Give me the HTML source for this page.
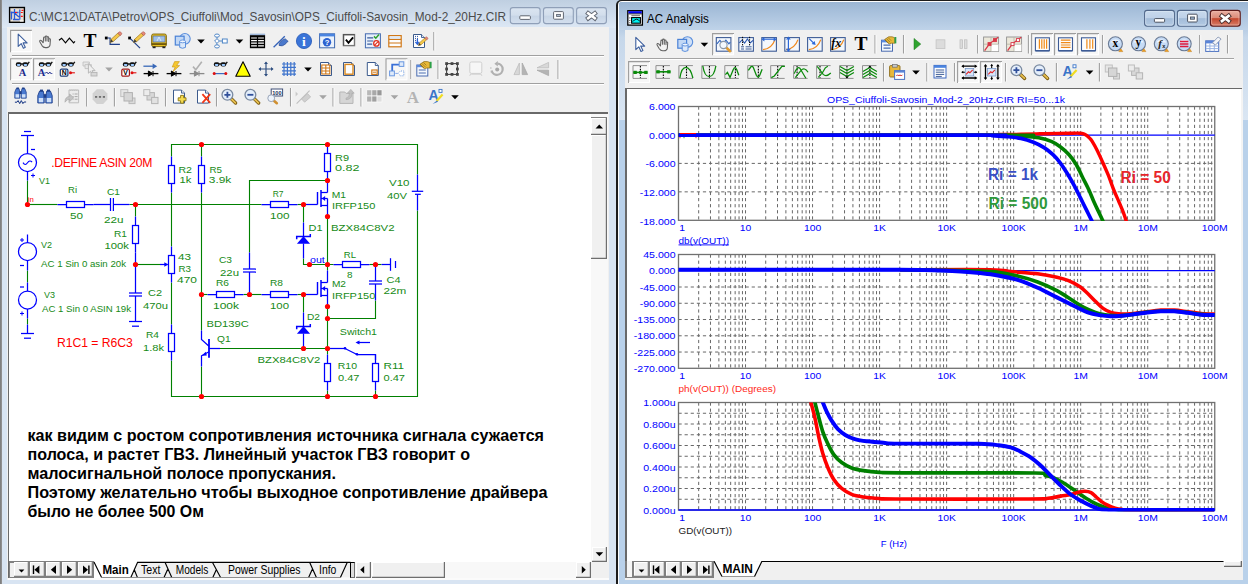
<!DOCTYPE html>
<html><head><meta charset="utf-8"><title>MC12</title>
<style>
html,body{margin:0;padding:0}
body{width:1248px;height:584px;position:relative;overflow:hidden;background:#b9d1ea;font-family:"Liberation Sans",sans-serif}
svg text{font-family:"Liberation Sans",sans-serif}
svg text.sf{font-family:"Liberation Serif",serif}
#ov{position:absolute;left:0;top:0}
</style></head><body>
<div style="position:absolute;left:0px;top:0px;width:617px;height:584px;background:#d8e4f2;"></div>
<div style="position:absolute;left:0px;top:0px;width:617px;height:28px;background:linear-gradient(#bfcfe1,#dde8f5);"></div>
<div style="position:absolute;left:0px;top:0px;width:1.7px;height:584px;background:linear-gradient(90deg,#787878,#969696);"></div>
<div style="position:absolute;left:7.3px;top:26.8px;width:601.7px;height:553px;background:#f0f0f0;"></div>
<div style="position:absolute;left:12px;top:55.0px;width:592px;height:1px;background:#a0a0a0;"></div>
<div style="position:absolute;left:12px;top:56.0px;width:592px;height:1px;background:#ffffff;"></div>
<div style="position:absolute;left:12px;top:83.2px;width:592px;height:1px;background:#a0a0a0;"></div>
<div style="position:absolute;left:12px;top:84.2px;width:592px;height:1px;background:#ffffff;"></div>
<div style="position:absolute;left:7.5px;top:112.3px;width:600px;height:466px;background:#696969;"></div>
<div style="position:absolute;left:9px;top:114px;width:598.5px;height:464px;background:#ffffff;"></div>
<div style="position:absolute;left:8px;top:577.7px;width:600.5px;height:2px;background:#fbfbfb;"></div>
<div style="position:absolute;left:591px;top:114px;width:16.5px;height:448px;background:#f8f8f8;"></div>
<div style="position:absolute;left:591px;top:116.6px;width:16px;height:18.6px;background:#f0f0f0;box-shadow:inset -1.2px -1.2px 0 #6e6e6e,inset 1px 1px 0 #fff;border-top:1.4px solid #808080;box-sizing:border-box;"></div>
<svg style="position:absolute;left:591px;top:114px" width="17" height="24"><path d="M4.5 14.6 L12 14.6 L8.25 10.6Z" fill="#000"/></svg>
<div style="position:absolute;left:591px;top:135.2px;width:16px;height:124px;background:#f0f0f0;box-shadow:inset -1.2px -1.2px 0 #6e6e6e,inset 1px 1px 0 #fff;"></div>
<div style="position:absolute;left:591.6px;top:546.7px;width:15.6px;height:15px;background:#f0f0f0;box-shadow:inset -1.2px -1.2px 0 #6e6e6e,inset 1px 1px 0 #fff;"></div>
<svg style="position:absolute;left:591px;top:546px" width="17" height="16"><path d="M4.6 6.2 L12.2 6.2 L8.4 10.2Z" fill="#000"/></svg>
<div style="position:absolute;left:9px;top:561.5px;width:598.5px;height:16.3px;background:#f0f0f0;"></div>
<div style="position:absolute;left:94px;top:561.5px;width:257px;height:16.3px;background:#ffffff;"></div>
<div style="position:absolute;left:9px;top:561.3px;width:85px;height:16.5px;background:#808080;"></div>
<div style="position:absolute;left:9.5px;top:562.6px;width:4.5px;height:14px;background:#f0f0f0;"></div>
<div style="position:absolute;left:13.9px;top:562.3px;width:15px;height:14.6px;background:#f0f0f0;box-shadow:inset -1.3px -1.3px 0 #808080,inset 1px 1px 0 #fff;"></div>
<div style="position:absolute;left:29.9px;top:562.3px;width:15px;height:14.6px;background:#f0f0f0;box-shadow:inset -1.3px -1.3px 0 #808080,inset 1px 1px 0 #fff;"></div>
<div style="position:absolute;left:45.9px;top:562.3px;width:15px;height:14.6px;background:#f0f0f0;box-shadow:inset -1.3px -1.3px 0 #808080,inset 1px 1px 0 #fff;"></div>
<div style="position:absolute;left:61.9px;top:562.3px;width:15px;height:14.6px;background:#f0f0f0;box-shadow:inset -1.3px -1.3px 0 #808080,inset 1px 1px 0 #fff;"></div>
<div style="position:absolute;left:77.9px;top:562.3px;width:15px;height:14.6px;background:#f0f0f0;box-shadow:inset -1.3px -1.3px 0 #808080,inset 1px 1px 0 #fff;"></div>
<svg style="position:absolute;left:0;top:556px" width="110" height="28"><path d="M18.6 13.4h5.8l-2.9 3z" fill="#000"/><path d="M33.5 9.4v8.6" stroke="#000" stroke-width="1.4"/><path d="M34.4 13.7l5-4.3v8.6z" fill="#000"/><path d="M50.8 13.7l5.2-4.4v8.8z" fill="#000"/><path d="M72.2 13.7l-5.2-4.4v8.8z" fill="#000"/><path d="M88.9 9.4v8.6" stroke="#000" stroke-width="1.4"/><path d="M88 13.7l-5-4.3v8.6z" fill="#000"/></svg>
<svg style="position:absolute;left:0;top:556px" width="620" height="28" font-family="Liberation Sans, sans-serif"><path d="M130.8 21.4 L137.6 6.3 H350.5 V21.4Z" fill="#f0f0f0"/><path d="M94 6.1 L101.6 21.4 M130.8 21.4 L137.6 6.3 H350.5 M134.2 13.5 L137.4 21.4 M165 6.3 L171.8 21.4 M164 21.4 L167.6 13.5 M212.4 6.3 L220.6 21.4 M212.8 21.4 L216.4 13.5 M309.6 6.3 L316.4 21.4 M308.6 21.4 L312.2 13.5 M340.4 21.4 L347.3 6.3" stroke="#000" stroke-width="1.15" fill="none"/><path d="M101.6 21.5 H341" stroke="#808080" stroke-width="0.9"/><text x="102.4" y="17.5" font-size="12.4" font-weight="bold" textLength="26.3" lengthAdjust="spacingAndGlyphs">Main</text><text x="141" y="17.5" font-size="12.7" textLength="19.4" lengthAdjust="spacingAndGlyphs">Text</text><text x="175.8" y="17.5" font-size="12.7" textLength="32.6" lengthAdjust="spacingAndGlyphs">Models</text><text x="228" y="17.5" font-size="12.7" textLength="72.5" lengthAdjust="spacingAndGlyphs">Power Supplies</text><text x="319" y="17.5" font-size="12.7" textLength="17.4" lengthAdjust="spacingAndGlyphs">Info</text></svg>
<div style="position:absolute;left:350.2px;top:561.7px;width:4.7px;height:15.9px;background:#dcdcdc;border:1.2px solid #000;border-right:1.4px solid #707070;border-bottom:1.2px solid #707070;box-sizing:border-box;"></div>
<div style="position:absolute;left:355px;top:561.6px;width:236px;height:16px;background:#f8f8f8;"></div>
<div style="position:absolute;left:355.6px;top:562px;width:15.6px;height:15.7px;background:#f0f0f0;box-shadow:inset -1.2px -1.2px 0 #6e6e6e,inset 1px 1px 0 #fff;"></div>
<div style="position:absolute;left:371.8px;top:562px;width:73px;height:15.7px;background:#f0f0f0;box-shadow:inset -1.2px -1.2px 0 #6e6e6e,inset 1px 1px 0 #fff;"></div>
<div style="position:absolute;left:576px;top:562px;width:15.4px;height:15.7px;background:#f0f0f0;box-shadow:inset -1.2px -1.2px 0 #6e6e6e,inset 1px 1px 0 #fff;"></div>
<div style="position:absolute;left:591.4px;top:561.8px;width:16px;height:16px;background:#f0f0f0;"></div>
<svg style="position:absolute;left:350px;top:556px" width="250" height="28"><path d="M10.2 13.7l4-3.8v7.6z M235.8 13.7l-4-3.8v7.6z" fill="#000"/></svg>
<div style="position:absolute;left:616.3px;top:0px;width:640px;height:584px;background:#1c1c1c;border-radius:5px 0 0 0;"></div>
<div style="position:absolute;left:617.9px;top:1.2px;width:640px;height:584px;background:#fdfdfd;border-radius:4px 0 0 0;"></div>
<div style="position:absolute;left:619px;top:2.3px;width:640px;height:584px;background:#b9d1ea;border-radius:3px 0 0 0;"></div>
<div style="position:absolute;left:619px;top:2.3px;width:640px;height:118px;background:linear-gradient(#9bb6d4 0%,#b6cbe3 22%,#c6d7ea 30%,#dae6f3 100%);border-radius:3px 0 0 0;"></div>
<div style="position:absolute;left:619px;top:2.3px;width:640px;height:28px;background:linear-gradient(#9bb6d4,#bfd3e9);border-radius:3px 0 0 0;"></div>
<div style="position:absolute;left:625.2px;top:30px;width:617.7px;height:550px;background:#f0f0f0;"></div>
<div style="position:absolute;left:630px;top:58px;width:604px;height:1px;background:#a4a4a4;"></div>
<div style="position:absolute;left:630px;top:59px;width:604px;height:1px;background:#ffffff;"></div>
<div style="position:absolute;left:625.2px;top:87.5px;width:617px;height:474px;background:#696969;"></div>
<div style="position:absolute;left:627px;top:89.2px;width:614.4px;height:472.3px;background:#ffffff;"></div>
<div style="position:absolute;left:1241.4px;top:88.5px;width:1.5px;height:473px;background:#f4f4f4;"></div>
<div style="position:absolute;left:627px;top:561px;width:615.9px;height:19px;background:#f0f0f0;"></div>
<div style="position:absolute;left:625.2px;top:561px;width:1.8px;height:16.8px;background:#808080;"></div>
<div style="position:absolute;left:632.4px;top:561.2px;width:81.4px;height:16.6px;background:#808080;"></div>
<div style="position:absolute;left:625.2px;top:576.6px;width:88.6px;height:1.3px;background:#808080;"></div>
<div style="position:absolute;left:627px;top:561px;width:5.4px;height:15.6px;background:#f6f6f6;"></div>
<div style="position:absolute;left:633.7px;top:562.3px;width:15px;height:14.6px;background:#f0f0f0;box-shadow:inset -1.3px -1.3px 0 #808080,inset 1px 1px 0 #fff;"></div>
<div style="position:absolute;left:649.7px;top:562.3px;width:15px;height:14.6px;background:#f0f0f0;box-shadow:inset -1.3px -1.3px 0 #808080,inset 1px 1px 0 #fff;"></div>
<div style="position:absolute;left:665.7px;top:562.3px;width:15px;height:14.6px;background:#f0f0f0;box-shadow:inset -1.3px -1.3px 0 #808080,inset 1px 1px 0 #fff;"></div>
<div style="position:absolute;left:681.7px;top:562.3px;width:15px;height:14.6px;background:#f0f0f0;box-shadow:inset -1.3px -1.3px 0 #808080,inset 1px 1px 0 #fff;"></div>
<div style="position:absolute;left:697.7px;top:562.3px;width:15px;height:14.6px;background:#f0f0f0;box-shadow:inset -1.3px -1.3px 0 #808080,inset 1px 1px 0 #fff;"></div>
<svg style="position:absolute;left:619.6px;top:556px" width="110" height="28"><path d="M18.6 13.4h5.8l-2.9 3z" fill="#000"/><path d="M33.5 9.4v8.6" stroke="#000" stroke-width="1.4"/><path d="M34.4 13.7l5-4.3v8.6z" fill="#000"/><path d="M50.8 13.7l5.2-4.4v8.8z" fill="#000"/><path d="M72.2 13.7l-5.2-4.4v8.8z" fill="#000"/><path d="M88.9 9.4v8.6" stroke="#000" stroke-width="1.4"/><path d="M88 13.7l-5-4.3v8.6z" fill="#000"/></svg>
<svg style="position:absolute;left:620px;top:556px" width="628" height="28" font-family="Liberation Sans, sans-serif"><path d="M94.1 5.2 L102 20.4 H134.5 L141.8 5.2Z" fill="#fff"/><path d="M102 20.5 H134.5" stroke="#8c8c8c" stroke-width="0.9"/><path d="M94.1 5.3 L102 20.5 M134.5 20.5 L141.8 5.5 H603.5" stroke="#000" stroke-width="1.2" fill="none"/><text x="102.4" y="17" font-size="13.2" font-weight="bold" textLength="30.4" lengthAdjust="spacingAndGlyphs">MAIN</text></svg>
<div style="position:absolute;left:1223.5px;top:560.6px;width:18px;height:6.6px;background:#f0f0f0;box-shadow:inset -1.3px -1.3px 0 #6a6a6a,inset 1px 1px 0 #fff;"></div>
<svg id="ov" width="1248" height="584" viewBox="0 0 1248 584">
<defs>
<linearGradient id="gbi" x1="0" y1="0" x2="0" y2="1"><stop offset="0" stop-color="#dbe5f1"/><stop offset="0.48" stop-color="#d2deec"/><stop offset="0.52" stop-color="#c7d5e6"/><stop offset="1" stop-color="#d3dfee"/></linearGradient>
<linearGradient id="gba" x1="0" y1="0" x2="0" y2="1"><stop offset="0" stop-color="#c9daed"/><stop offset="0.48" stop-color="#bed1e8"/><stop offset="0.52" stop-color="#a3bcd9"/><stop offset="1" stop-color="#b4cae3"/></linearGradient>
<linearGradient id="gbc" x1="0" y1="0" x2="0" y2="1"><stop offset="0" stop-color="#eab1a4"/><stop offset="0.48" stop-color="#dc8b78"/><stop offset="0.52" stop-color="#c4472e"/><stop offset="1" stop-color="#d8826c"/></linearGradient>
</defs>
<text x="29" y="20.6" font-size="12.6" fill="#4b4b4b" textLength="477" lengthAdjust="spacingAndGlyphs">C:\MC12\DATA\Petrov\OPS_Ciuffoli\Mod_Savosin\OPS_Ciuffoli-Savosin_Mod-2_20Hz.CIR</text>
<rect x="9.6" y="7.5" width="14.8" height="14.8" fill="#e8e2d6" stroke="#000" stroke-width="1.4"/><path d="M14.5 9v11M10.5 12.5h8M13 19.5h6.5M19.8 9.5v10M15 13.5l4 3.5M11.5 11.5v8" stroke="#2a5bd8" stroke-width="1.3" fill="none"/><path d="M15 12.5h2M21.5 10.3h2M20.8 12.5h2M20.8 16.4h2" stroke="#ff1010" stroke-width="1.2"/><path d="M20 21h3.6" stroke="#fff" stroke-width="1"/>
<rect x="510.3" y="7.6" width="29.8" height="16" rx="2.6" fill="url(#gbi)" stroke="#8f9fb8" stroke-width="1.1"/>
<rect x="543.5" y="7.6" width="29.8" height="16" rx="2.6" fill="url(#gbi)" stroke="#8f9fb8" stroke-width="1.1"/>
<rect x="576.6" y="7.6" width="29.8" height="16" rx="2.6" fill="url(#gbi)" stroke="#8f9fb8" stroke-width="1.1"/>
<rect x="519.8" y="15.8" width="10.6" height="3.6" rx="0.8" fill="#fff" stroke="#5f6570" stroke-width="1"/>
<rect x="553.6" y="11.6" width="9.8" height="7.6" rx="0.8" fill="#fff" stroke="#5f6570" stroke-width="1"/><rect x="556.6" y="14.4" width="3.8" height="2" fill="#b9c6d8" stroke="#5f6570" stroke-width="0.9"/>
<path d="M588.2 13.3 L594.8 18.3 M594.8 13.3 L588.2 18.3" stroke="#5f6570" stroke-width="4.4" stroke-linecap="square"/><path d="M588.2 13.3 L594.8 18.3 M594.8 13.3 L588.2 18.3" stroke="#fff" stroke-width="2.6" stroke-linecap="square"/>
<text x="647" y="23.1" font-size="12.8" fill="#000" textLength="61.8" lengthAdjust="spacingAndGlyphs">AC Analysis</text>
<rect x="627.8" y="10.7" width="14.6" height="14.4" fill="#fff" stroke="#000" stroke-width="1.3"/><rect x="628.4" y="11.2" width="13.4" height="2.3" fill="#0000ee"/><path d="M628.4 13.9h13.4" stroke="#000" stroke-width="0.8"/><path d="M631.4 15.7h8.6" stroke="#444" stroke-width="0.8"/><rect x="631.6" y="17.6" width="8.8" height="5.6" fill="#00f4f4" stroke="#000" stroke-width="1.1"/><path d="M632.8 21.6l1.6-1.6q2.2-1.6 4.2 0l1.4 1.6" stroke="#000" stroke-width="0.9" fill="none"/><path d="M629.8 17.5v0.8M629.8 20v0.8M629.8 22.4v0.8" stroke="#000" stroke-width="0.9"/>
<rect x="1144.6" y="10.4" width="29.8" height="15.8" rx="2.6" fill="url(#gba)" stroke="#52688a" stroke-width="1.1"/><rect x="1145.6999999999998" y="11.5" width="27.6" height="13.6" rx="1.8" fill="none" stroke="#dce8f5" stroke-opacity="0.7" stroke-width="0.9"/>
<rect x="1177.4" y="10.4" width="29.8" height="15.8" rx="2.6" fill="url(#gba)" stroke="#52688a" stroke-width="1.1"/><rect x="1178.5" y="11.5" width="27.6" height="13.6" rx="1.8" fill="none" stroke="#dce8f5" stroke-opacity="0.7" stroke-width="0.9"/>
<rect x="1210.4" y="10.4" width="29.8" height="15.8" rx="2.6" fill="url(#gbc)" stroke="#5c1c1c" stroke-width="1.2"/><rect x="1211.6000000000001" y="11.6" width="27.4" height="13.4" rx="1.8" fill="none" stroke="#f3b9ac" stroke-opacity="0.7" stroke-width="0.9"/>
<rect x="1154.4" y="18.6" width="10.2" height="3.6" rx="0.8" fill="#fff" stroke="#4a5260" stroke-width="1"/>
<rect x="1187.6" y="14.2" width="9.6" height="7.8" rx="0.8" fill="#fff" stroke="#4a5260" stroke-width="1"/><rect x="1190.4" y="17" width="4" height="2.2" fill="#9fb6d4" stroke="#4a5260" stroke-width="0.9"/>
<path d="M1222 16 L1228.6 21 M1228.6 16 L1222 21" stroke="#4a3030" stroke-width="4.6" stroke-linecap="square"/><path d="M1222 16 L1228.6 21 M1228.6 16 L1222 21" stroke="#fff" stroke-width="2.7" stroke-linecap="square"/>
<rect x="10" y="29.8" width="22" height="22.400000000000002" fill="#f7f7f7"/><path d="M10.6 52.2V30.400000000000002H32" stroke="#9c9c9c" stroke-width="1.1" fill="none"/><path d="M11 51.7H31.5V30.8" stroke="#fff" stroke-width="1" fill="none"/>
<g transform="translate(14.00,33.00)"><path d="M4.2 1.2v12.2l3-2.8 2.2 4.6 1.9-0.9-2.2-4.4h4z" fill="#fff" stroke="#3d5f9e" stroke-width="1.1" stroke-linejoin="round"/></g>
<g transform="translate(37.00,33.00)"><path d="M6.2 9.8L4.4 7.6q-0.8-0.7-1.5-0.1q-0.5 0.7 0 1.5L5 12.6q1.3 2 3.4 2h1.4q2.6 0 3.2-2.4L13.4 6.6q0-0.9-0.85-0.9t-0.85 0.9V8.4V4.6q0-0.9-0.85-0.9t-0.85 0.9V8V3.8q0-0.9-0.85-0.9t-0.85 0.9V8V4.8q0-0.9-0.85-0.9t-0.85 0.9z" fill="#f2f2f2" stroke="#606060" stroke-width="1.05" stroke-linejoin="round"/></g>
<g transform="translate(59.00,33.00)"><path d="M0 7.2L2.6 5.2L6.5 9.9L10.4 5.2L14.6 9.9L16 8.4" stroke="#000" stroke-width="1.15" fill="none"/></g>
<g transform="translate(82.00,33.00)"><text x="8" y="14" class="sf" font-weight="bold" font-size="19.5" text-anchor="middle" fill="#000">T</text></g>
<g transform="translate(104.50,33.00)"><rect x="0.4" y="3.6" width="2.8" height="2.8" fill="#000"/><path d="M3 5h2.6v6.4h9.8" stroke="#1f3f87" stroke-width="1.2" fill="none"/><g transform="translate(5.6,9.4) scale(0.95)"><path d="M0 0l1-3.2 7.2-6.6 2.3 2.4-7.2 6.5z" fill="#f4c84a" stroke="#9a7420" stroke-width="0.7"/><path d="M8.2-9.8l1.4-1.2q0.9-0.5 1.7 0.3l0.7 0.8q0.6 0.9-0.1 1.6l-1.4 1.2z" fill="#e58a7c" stroke="#a85244" stroke-width="0.6"/><path d="M0 0l1-3.2 2.3 2.3z" fill="#3a3a3a"/></g></g>
<g transform="translate(128.00,33.00)"><rect x="0.2" y="3.6" width="2.8" height="2.8" fill="#000"/><path d="M2.4 5.6l9.6 9.6" stroke="#1f3f87" stroke-width="1.2" fill="none"/><g transform="translate(5.6,9.4) scale(0.95)"><path d="M0 0l1-3.2 7.2-6.6 2.3 2.4-7.2 6.5z" fill="#f4c84a" stroke="#9a7420" stroke-width="0.7"/><path d="M8.2-9.8l1.4-1.2q0.9-0.5 1.7 0.3l0.7 0.8q0.6 0.9-0.1 1.6l-1.4 1.2z" fill="#e58a7c" stroke="#a85244" stroke-width="0.6"/><path d="M0 0l1-3.2 2.3 2.3z" fill="#3a3a3a"/></g></g>
<g transform="translate(151.00,33.00)"><rect x="0.6" y="1" width="14.8" height="12.6" rx="1.8" fill="#e8c020" stroke="#7a6410" stroke-width="0.9"/><rect x="2" y="3" width="12" height="6" fill="#9fc0e8" stroke="#5a6a88" stroke-width="0.7"/><path d="M6 8l2-4 2 4" stroke="#e8f0fa" stroke-width="0.8" fill="none"/><rect x="0.6" y="10.4" width="14.8" height="1.3" fill="#403000"/><rect x="1.6" y="13.4" width="3" height="1.8" fill="#222"/><rect x="11.4" y="13.4" width="3" height="1.8" fill="#222"/></g>
<g transform="translate(174.50,33.00)"><circle cx="10.4" cy="5.8" r="5.3" fill="#cfe0f7" stroke="#5a8edc" stroke-width="1.1"/><rect x="0.8" y="3.2" width="8.8" height="8.8" fill="#c2d8f5" stroke="#4a82d6" stroke-width="1.2"/><path d="M5.2 8.4v6q2.8 1.7 5.8 0v-6" fill="#dce9fa" stroke="#5a8edc" stroke-width="1"/><ellipse cx="8.1" cy="8.4" rx="2.9" ry="1.4" fill="#f0f6fe" stroke="#5a8edc" stroke-width="0.9"/></g>
<g transform="translate(193.00,33.00)"><path d="M4.2 6.6h7.6l-3.8 4z" fill="#000"/></g>
<g transform="translate(212.00,33.00)"><ellipse cx="5" cy="2.6" rx="2.4" ry="1.6" fill="#fff" stroke="#4f86c6" stroke-width="1"/><path d="M5 5.6l2.4 2.4-2.4 2.4-2.4-2.4z" fill="#fff" stroke="#4f86c6" stroke-width="1"/><ellipse cx="5" cy="13.4" rx="2.4" ry="1.6" fill="#fff" stroke="#4f86c6" stroke-width="1"/><path d="M5 4.2v1.4M5 10.4v1.4M7.4 8h3" stroke="#4f86c6" stroke-width="1"/><rect x="10.4" y="6" width="4.8" height="4" fill="#fff" stroke="#4f86c6" stroke-width="1"/></g>
<g transform="translate(231.50,33.00)"><path d="M4.2 6.6h7.6l-3.8 4z" fill="#000"/></g>
<g transform="translate(249.50,33.00)"><rect x="0.4" y="0.6" width="15.2" height="2" fill="#9fb8dc"/><rect x="0.4" y="2.2" width="15.2" height="13" fill="#000"/><path d="M1.6 5h5.8M8.6 5h5.8M1.6 7.6h5.8M8.6 7.6h5.8M1.6 10.2h5.8M8.6 10.2h5.8M1.6 12.8h5.8M8.6 12.8h5.8" stroke="#fff" stroke-width="1.2"/></g>
<g transform="translate(273.00,33.00)"><path d="M0.6 14.2l11.2-11" stroke="#3562b8" stroke-width="1.3"/><path d="M6 12.4q0.4-4.6 6.2-6.6l3 2.6q-2.4 1-2.6 2.6q-3.6 3-6.6 1.4z" fill="#4a78cc" stroke="#2c5098" stroke-width="0.7"/></g>
<g transform="translate(296.00,33.00)"><circle cx="8" cy="8" r="7.6" fill="#3a74d8"/><circle cx="8" cy="8" r="7.6" fill="none" stroke="#2458b8" stroke-width="0.8"/><text x="8" y="13" class="sf" font-weight="bold" font-size="13.5" text-anchor="middle" fill="#fff">i</text></g>
<g transform="translate(319.00,33.00)"><rect x="0.6" y="0.8" width="15" height="14" fill="#eaf1fb" stroke="#3e68b0" stroke-width="1"/><rect x="0.6" y="0.8" width="15" height="2.6" fill="#4a84e0"/><circle cx="8" cy="9.2" r="4.2" fill="#2c62d0"/><text x="8" y="12" font-size="7.6" font-weight="bold" text-anchor="middle" fill="#fff">?</text></g>
<g transform="translate(341.50,33.00)"><rect x="2" y="1.6" width="11" height="11" fill="#fff" stroke="#777" stroke-width="1.4"/><path d="M2 12.6v-11h11" stroke="#555" stroke-width="1.2" fill="none"/><path d="M4.4 6.6l2.6 3.2 4.6-5.4" stroke="#000" stroke-width="1.9" fill="none"/></g>
<g transform="translate(364.80,33.00)"><rect x="0.6" y="0.8" width="15" height="14" fill="#e6eefa" stroke="#446ab0" stroke-width="1"/><path d="M2.4 4.8h6M2.4 8h6M2.4 11.2h5" stroke="#3a5c9c" stroke-width="1.2"/><path d="M9.2 3.4l1.8 1.8 3.2-3.6" stroke="#2ca02c" stroke-width="1.5" fill="none"/><circle cx="11.6" cy="10.4" r="2.7" fill="#fff" stroke="#e03020" stroke-width="1.3"/><path d="M9.8 12.2l3.6-3.6" stroke="#e03020" stroke-width="1.2"/></g>
<g transform="translate(387.00,33.00)"><rect x="1.8" y="2.6" width="12.4" height="11.2" fill="#fdfdfd" stroke="#d07818" stroke-width="1.2"/><path d="M1.8 6.4h12.4M1.8 10h12.4" stroke="#d07818" stroke-width="1.2"/><rect x="3" y="3.6" width="10" height="2" fill="#dbe8f8"/></g>
<g transform="translate(411.00,33.00)"><path d="M2.5 1.5h8l3 3v10h-11z" fill="#fff" stroke="#3b5a8c" stroke-width="1"/><path d="M10.5 1.5v3h3" fill="#dfe8f5" stroke="#3b5a8c" stroke-width="0.9"/><path d="M4 3.4h1M6 3.4h1M4 5.4h1M6 5.4h1M6 7.4h1M4 7.4h1" stroke="#2a50a0" stroke-width="1"/><path d="M6.4 6v4.4M4.4 8.8l2 2.4 2-2.4" stroke="#2a62d8" stroke-width="1.3" fill="none"/><g transform="translate(7.4,12.6) scale(0.78)"><path d="M0 0l1-3.2 7.2-6.6 2.3 2.4-7.2 6.5z" fill="#f4c84a" stroke="#9a7420" stroke-width="0.7"/><path d="M8.2-9.8l1.4-1.2q0.9-0.5 1.7 0.3l0.7 0.8q0.6 0.9-0.1 1.6l-1.4 1.2z" fill="#e58a7c" stroke="#a85244" stroke-width="0.6"/><path d="M0 0l1-3.2 2.3 2.3z" fill="#3a3a3a"/></g></g>
<path d="M433.8 32V50.5" stroke="#a0a0a0" stroke-width="1.1"/><path d="M434.90000000000003 32V50.5" stroke="#fafafa" stroke-width="1"/>
<rect x="10" y="58.2" width="22" height="22.0" fill="#f7f7f7"/><path d="M10.6 80.2V58.800000000000004H32" stroke="#9c9c9c" stroke-width="1.1" fill="none"/><path d="M11 79.7H31.5V59.2" stroke="#fff" stroke-width="1" fill="none"/>
<rect x="33" y="58.2" width="22" height="22.0" fill="#f7f7f7"/><path d="M33.6 80.2V58.800000000000004H55" stroke="#9c9c9c" stroke-width="1.1" fill="none"/><path d="M34 79.7H54.5V59.2" stroke="#fff" stroke-width="1" fill="none"/>
<rect x="385.4" y="58.2" width="22.0" height="22.0" fill="#f7f7f7"/><path d="M386.0 80.2V58.800000000000004H407.4" stroke="#9c9c9c" stroke-width="1.1" fill="none"/><path d="M386.4 79.7H406.9V59.2" stroke="#fff" stroke-width="1" fill="none"/>
<g transform="translate(14.00,61.00)"><rect x="1.8" y="1.3" width="5.7" height="4.1" rx="1.9" fill="#111"/><rect x="8.5" y="1.3" width="5.7" height="4.1" rx="1.9" fill="#111"/><rect x="7" y="2.3" width="2" height="1.3" fill="#111"/><path d="M13.6 3.2L15.3 0.9" stroke="#111" stroke-width="1.3"/><rect x="2.9" y="3" width="3.5" height="1.9" rx="0.8" fill="#9ccaff"/><rect x="9.7" y="3" width="3.5" height="1.9" rx="0.8" fill="#9ccaff"/><text x="8.4" y="15" class="sf" font-weight="bold" font-size="10.4" text-anchor="middle" fill="#1c2a8c">A</text></g>
<g transform="translate(37.00,61.00)"><rect x="1.8" y="1.3" width="5.7" height="4.1" rx="1.9" fill="#111"/><rect x="8.5" y="1.3" width="5.7" height="4.1" rx="1.9" fill="#111"/><rect x="7" y="2.3" width="2" height="1.3" fill="#111"/><path d="M13.6 3.2L15.3 0.9" stroke="#111" stroke-width="1.3"/><rect x="2.9" y="3" width="3.5" height="1.9" rx="0.8" fill="#9ccaff"/><rect x="9.7" y="3" width="3.5" height="1.9" rx="0.8" fill="#9ccaff"/><text x="4.4" y="15" class="sf" font-weight="bold" font-size="10.4" text-anchor="middle" fill="#1c2a8c">A</text><path d="M7.4 12h1.4l1-1 1.5 2 1.5-2 1.5 2 1-1" stroke="#1c2a8c" stroke-width="0.9" fill="none"/></g>
<g transform="translate(59.50,61.00)"><rect x="1.8" y="1.3" width="5.7" height="4.1" rx="1.9" fill="#111"/><rect x="8.5" y="1.3" width="5.7" height="4.1" rx="1.9" fill="#111"/><rect x="7" y="2.3" width="2" height="1.3" fill="#111"/><path d="M13.6 3.2L15.3 0.9" stroke="#111" stroke-width="1.3"/><rect x="2.9" y="3" width="3.5" height="1.9" rx="0.8" fill="#9ccaff"/><rect x="9.7" y="3" width="3.5" height="1.9" rx="0.8" fill="#9ccaff"/><rect x="0.8" y="8.2" width="7.6" height="7" rx="1.2" fill="#fff" stroke="#1c3c78" stroke-width="1.2"/><text x="4.6" y="14.2" font-size="6.8" font-weight="bold" text-anchor="middle" fill="#000">N</text><circle cx="11" cy="11.8" r="1.5" fill="#e01010"/><path d="M11 11.8h4.4" stroke="#e01010" stroke-width="1.1"/></g>
<g transform="translate(82.00,61.00)"><path d="M1 1h6.4v4H1z" fill="#e8e8e8" stroke="#c2c2c2" stroke-width="0.9"/><path d="M3 3.6h6.4v4H3z" fill="#e8e8e8" stroke="#c2c2c2" stroke-width="0.9"/><path d="M6.4 2.6v9.6l2.2-2 1.6 3.4 1.6-0.8-1.7-3.2h3z" fill="#f0f0f0" stroke="#b8b8b8" stroke-width="1"/><rect x="9" y="11.4" width="6" height="3.6" fill="#d8d8d8" stroke="#b4b4b4" stroke-width="0.9"/></g>
<g transform="translate(101.00,61.00)"><path d="M4.2 6.6h7.6l-3.8 4z" fill="#a4a4a4"/></g>
<g transform="translate(121.00,61.00)"><rect x="1.8" y="1.3" width="5.7" height="4.1" rx="1.9" fill="#111"/><rect x="8.5" y="1.3" width="5.7" height="4.1" rx="1.9" fill="#111"/><rect x="7" y="2.3" width="2" height="1.3" fill="#111"/><path d="M13.6 3.2L15.3 0.9" stroke="#111" stroke-width="1.3"/><rect x="2.9" y="3" width="3.5" height="1.9" rx="0.8" fill="#9ccaff"/><rect x="9.7" y="3" width="3.5" height="1.9" rx="0.8" fill="#9ccaff"/><rect x="0.8" y="8.2" width="7.6" height="7" rx="1.2" fill="#fff" stroke="#a01818" stroke-width="1.2"/><text x="4.6" y="14.2" font-size="6.8" font-weight="bold" text-anchor="middle" fill="#000">V</text><circle cx="11" cy="11.8" r="1.5" fill="#e01010"/><path d="M11 11.8h4.4" stroke="#e01010" stroke-width="1.1"/></g>
<g transform="translate(143.00,61.00)"><path d="M0.4 5.2h11" stroke="#3868b8" stroke-width="1.3"/><path d="M9.6 2.4l4.6 2.8-4.6 2.8z" fill="#3868b8"/><path d="M0.6 12.6h14.8" stroke="#000" stroke-width="1.3"/><path d="M5.4 10.0v5.2l4.4-2.6zM10 10.0v5.2" fill="#000" stroke="#000" stroke-width="1"/></g>
<g transform="translate(166.00,61.00)"><path d="M0.6 12.6h14.8" stroke="#000" stroke-width="1.3"/><path d="M5.4 10.0v5.2l4.4-2.6zM10 10.0v5.2" fill="#000" stroke="#000" stroke-width="1"/><path d="M8.6 0.6h4.8l-2.8 4h3l-6.6 6 2.2-4.6h-3z" fill="#f6c830" stroke="#c89010" stroke-width="0.6"/></g>
<g transform="translate(189.00,61.00)"><path d="M0.6 12.6h14.8" stroke="#8a8a8a" stroke-width="1.3"/><path d="M5.4 10.0v5.2l4.4-2.6zM10 10.0v5.2" fill="#8a8a8a" stroke="#8a8a8a" stroke-width="1"/><path d="M4 5.6l2.8 3.2 6-8" stroke="#b0b0b0" stroke-width="1.6" fill="none"/></g>
<g transform="translate(212.00,61.00)"><rect x="1.8" y="1.3" width="5.7" height="4.1" rx="1.9" fill="#111"/><rect x="8.5" y="1.3" width="5.7" height="4.1" rx="1.9" fill="#111"/><rect x="7" y="2.3" width="2" height="1.3" fill="#111"/><path d="M13.6 3.2L15.3 0.9" stroke="#111" stroke-width="1.3"/><rect x="2.9" y="3" width="3.5" height="1.9" rx="0.8" fill="#9ccaff"/><rect x="9.7" y="3" width="3.5" height="1.9" rx="0.8" fill="#9ccaff"/><path d="M2 12.6h12" stroke="#3a6abf" stroke-width="1.2"/><circle cx="2.2" cy="12.6" r="1.5" fill="#e01010"/><circle cx="13.8" cy="12.6" r="1.5" fill="#e01010"/></g>
<g transform="translate(235.00,61.00)"><path d="M8 0.8l7.2 14.4H0.8z" fill="#ffff00" stroke="#000" stroke-width="1.1" stroke-linejoin="round"/></g>
<g transform="translate(258.00,61.00)"><path d="M8 1.4v13.2M1.4 8h13.2" stroke="#2f4f80" stroke-width="1.2"/><path d="M8 0.4l2 2.6h-4zM8 15.6l2-2.6h-4zM0.4 8l2.6-2v4zM15.6 8l-2.6-2v4z" fill="#2f4f80"/></g>
<g transform="translate(281.00,61.00)"><path d="M3 1v14M6.4 1v14M9.8 1v14M13.2 1v14M1 3h14M1 6.4h14M1 9.8h14M1 13.2h14" stroke="#3f74cc" stroke-width="1.2"/></g>
<g transform="translate(300.00,61.00)"><path d="M4.2 6.6h7.6l-3.8 4z" fill="#000"/></g>
<g transform="translate(318.00,61.00)"><path d="M2.5 1.5h8l3 3v10h-11z" fill="#fff" stroke="#3b5a8c" stroke-width="1"/><path d="M10.5 1.5v3h3" fill="#dfe8f5" stroke="#3b5a8c" stroke-width="0.9"/><rect x="3.8" y="4" width="8" height="9" fill="#fff" stroke="#d07818" stroke-width="1.1"/><path d="M7.8 4v9M3.8 7h8M3.8 10h8" stroke="#d07818" stroke-width="1.1"/></g>
<g transform="translate(341.00,61.00)"><path d="M2.5 1.5h8l3 3v10h-11z" fill="#fff" stroke="#3b5a8c" stroke-width="1"/><path d="M10.5 1.5v3h3" fill="#dfe8f5" stroke="#3b5a8c" stroke-width="0.9"/><rect x="4" y="3.4" width="8" height="9.8" fill="#fdfdfd" stroke="#d88820" stroke-width="1.4"/></g>
<g transform="translate(364.80,61.00)"><path d="M2.5 1.5h8l3 3v10h-11z" fill="#fff" stroke="#3b5a8c" stroke-width="1"/><path d="M10.5 1.5v3h3" fill="#dfe8f5" stroke="#3b5a8c" stroke-width="0.9"/><rect x="7" y="9" width="5.4" height="4.4" fill="#fff" stroke="#d07818" stroke-width="1.2"/><path d="M8 11.2h3.4" stroke="#d07818" stroke-width="1"/></g>
<g transform="translate(388.60,61.00)"><path d="M3.6 10V3.6h7" stroke="#3a70d8" stroke-width="1.8" fill="none"/><rect x="10.6" y="0.8" width="4.6" height="4.6" fill="#dfeafa" stroke="#6a98e0" stroke-width="1"/><rect x="1" y="10" width="4.8" height="4.8" fill="#dfeafa" stroke="#6a98e0" stroke-width="1"/><path d="M7 12.4h3" stroke="#3a70d8" stroke-width="1" stroke-dasharray="1 1"/><path d="M9.4 12.4l2.4-2.4h3.4v4.8h-3.4z" fill="#fff" stroke="#6a98e0" stroke-width="0.9" stroke-dasharray="1 1"/></g>
<g transform="translate(415.80,61.00)"><rect x="1" y="4" width="11" height="11" fill="#f4f8fd" stroke="#4a6cb0" stroke-width="1"/><rect x="1" y="4" width="11" height="2.2" fill="#5a8ae0"/><path d="M3 9h7M3 12h7" stroke="#4a6cb0" stroke-width="1.2"/><path d="M4.2 3.2l4-2.6q4-0.6 6 1v5.4h-3.2q-2.4 1.6-4.2-0.8z" fill="#e8b838" stroke="#8a6a18" stroke-width="0.7"/><rect x="14" y="0.8" width="1.8" height="6.4" fill="#2ca048"/><path d="M4.4 3.4l3.6 3.4M6 2.4l3.6 3.6M7.6 1.4l3 3" stroke="#6a5010" stroke-width="0.5"/></g>
<g transform="translate(444.00,61.00)"><rect x="2.6" y="2.6" width="10.8" height="10.8" fill="none" stroke="#444" stroke-width="1.1"/><rect x="1.2" y="1.2" width="2.8" height="2.8" fill="#444"/><rect x="1.2" y="6.6" width="2.8" height="2.8" fill="#444"/><rect x="1.2" y="12" width="2.8" height="2.8" fill="#444"/><rect x="6.6" y="1.2" width="2.8" height="2.8" fill="#444"/><rect x="6.6" y="12" width="2.8" height="2.8" fill="#444"/><rect x="12" y="1.2" width="2.8" height="2.8" fill="#444"/><rect x="12" y="6.6" width="2.8" height="2.8" fill="#444"/><rect x="12" y="12" width="2.8" height="2.8" fill="#444"/></g>
<g transform="translate(467.80,61.00)"><rect x="2" y="1" width="12" height="11.4" rx="1.6" fill="#f6f6f6" stroke="#cfcfcf" stroke-width="1"/><path d="M2 14.8q0-1.6 1.6-1.6h8.8q1.6 0 1.6 1.6" fill="none" stroke="#cfcfcf" stroke-width="1"/></g>
<g transform="translate(489.00,61.00)"><path d="M8.4 2.6A5.6 5.6 0 1 1 2.6 9.4" fill="none" stroke="#b0b0b0" stroke-width="2.2"/><path d="M8.8 0l-3.4 2.8 3.4 2.8z" fill="#b0b0b0"/><circle cx="8.2" cy="8.4" r="2" fill="#a8a8a8"/><path d="M1 7h1.6M1.6 11h1.4" stroke="#b8b8b8" stroke-width="1"/></g>
<g transform="translate(512.80,61.00)"><path d="M6.6 2v11.6H1.2z" fill="#d8d8d8" stroke="#bcbcbc" stroke-width="0.8"/><path d="M9.4 2v11.6h5.4z" fill="#b4b4b4" stroke="#a8a8a8" stroke-width="0.8"/></g>
<g transform="translate(535.00,61.00)"><path d="M13.6 6.8H2l11.6-5.4z" fill="#d8d8d8" stroke="#bcbcbc" stroke-width="0.8"/><path d="M13.6 9.2H2l11.6 5.4z" fill="#b4b4b4" stroke="#a8a8a8" stroke-width="0.8"/></g>
<path d="M410.8 60V79" stroke="#a0a0a0" stroke-width="1.1"/><path d="M411.90000000000003 60V79" stroke="#fafafa" stroke-width="1"/>
<path d="M438 60V79" stroke="#a0a0a0" stroke-width="1.1"/><path d="M439.1 60V79" stroke="#fafafa" stroke-width="1"/>
<path d="M558 60V79" stroke="#a0a0a0" stroke-width="1.1"/><path d="M559.1 60V79" stroke="#fafafa" stroke-width="1"/>
<g transform="translate(12.50,88.60)"><g transform="translate(1.6,-0.8) scale(0.8)"><g transform="translate(0,-1.4)"><path d="M2.6 2.4h3.6l1 4.6v7.4H0.8V7z" fill="#4a7ad0" stroke="#20408a" stroke-width="0.9"/><path d="M9.8 2.4h3.6l1.8 4.6v7.4H8.8V7z" fill="#4a7ad0" stroke="#20408a" stroke-width="0.9"/><rect x="6.6" y="5.6" width="2.8" height="3.6" fill="#20408a"/><rect x="1.8" y="9.4" width="4.4" height="4.2" fill="#cfe0f8"/><rect x="9.8" y="9.4" width="4.4" height="4.2" fill="#cfe0f8"/><rect x="3" y="1" width="3" height="2" fill="#20408a"/><rect x="10" y="1" width="3" height="2" fill="#20408a"/></g></g><path d="M2.4 13.6h2l1.2-1.6 1.6 3 1.6-3 1.6 3 1.2-1.6h2" stroke="#103080" stroke-width="1" fill="none"/></g>
<g transform="translate(37.00,88.60)"><g transform="translate(0,0)"><path d="M2.6 2.4h3.6l1 4.6v7.4H0.8V7z" fill="#4a7ad0" stroke="#20408a" stroke-width="0.9"/><path d="M9.8 2.4h3.6l1.8 4.6v7.4H8.8V7z" fill="#4a7ad0" stroke="#20408a" stroke-width="0.9"/><rect x="6.6" y="5.6" width="2.8" height="3.6" fill="#20408a"/><rect x="1.8" y="9.4" width="4.4" height="4.2" fill="#cfe0f8"/><rect x="9.8" y="9.4" width="4.4" height="4.2" fill="#cfe0f8"/><rect x="3" y="1" width="3" height="2" fill="#20408a"/><rect x="10" y="1" width="3" height="2" fill="#20408a"/></g></g>
<g transform="translate(64.00,88.60)"><path d="M5 1.4h9.6v12.8H5z" fill="#ececec" stroke="#bdbdbd" stroke-width="1"/><path d="M5.6 1.2l1 1 1-1 1 1 1-1 1 1 1-1 1 1 1-1" stroke="#bdbdbd" stroke-width="0.8" fill="none"/><path d="M8.6 5.4h1M10.6 5.4h3M8.6 8h1M10.6 8h3M8.6 10.6h1M10.6 10.6h3" stroke="#a8a8a8" stroke-width="1"/><path d="M1 13.6q0-5.6 4.6-5.6V5.4l4 3.8-4 3.8v-2.6q-2.4 0-4.6 3.2z" fill="#c4c4c4" stroke="#aaa" stroke-width="0.7"/></g>
<g transform="translate(92.00,88.60)"><path d="M4.8 0.6h6.4l4.2 4.4v6l-4.2 4.4H4.8L0.6 11V5z" fill="#d2d2d2"/><rect x="3" y="7.4" width="2.2" height="1.8" fill="#707070"/><rect x="6.9" y="7.4" width="2.2" height="1.8" fill="#707070"/><rect x="10.8" y="7.4" width="2.2" height="1.8" fill="#707070"/></g>
<g transform="translate(120.00,88.60)"><rect x="0.8" y="1" width="7" height="7" fill="#e6e6e6" stroke="#c0c0c0" stroke-width="1"/><rect x="9" y="9.4" width="6" height="5.6" fill="#dadada" stroke="#b8b8b8" stroke-width="1"/><rect x="4" y="4" width="8.4" height="8.4" fill="#d6d6d6" stroke="#b0b0b0" stroke-width="1"/></g>
<g transform="translate(143.00,88.60)"><rect x="4" y="4" width="7.4" height="7.4" fill="#d8d8d8" stroke="#b4b4b4" stroke-width="1"/><rect x="0.8" y="1" width="6" height="6" fill="#ececec" stroke="#bcbcbc" stroke-width="1"/><rect x="8.6" y="8.8" width="6.4" height="6.2" fill="#e2e2e2" stroke="#b4b4b4" stroke-width="1"/></g>
<g transform="translate(171.00,88.60)"><path d="M2.5 1.5h8l3 3v10h-11z" fill="#fff" stroke="#3b5a8c" stroke-width="1"/><path d="M10.5 1.5v3h3" fill="#dfe8f5" stroke="#3b5a8c" stroke-width="0.9"/><path d="M9.6 6.8h3v2.4h2.4v3h-2.4v2.4h-3v-2.4H7.2v-3h2.4z" fill="#f6dc50" stroke="#8a7410" stroke-width="0.9"/></g>
<g transform="translate(195.00,88.60)"><path d="M2.5 1.5h8l3 3v10h-11z" fill="#fff" stroke="#3b5a8c" stroke-width="1"/><path d="M10.5 1.5v3h3" fill="#dfe8f5" stroke="#3b5a8c" stroke-width="0.9"/><path d="M7.4 5.6l7.8 8.6M15.2 5.6l-7.8 8.6" stroke="#f03818" stroke-width="1.8"/></g>
<g transform="translate(221.00,88.60)"><path d="M10 10l4.6 4.4" stroke="#7a5a10" stroke-width="3.4" stroke-linecap="round"/><path d="M10.4 10.4l4 3.8" stroke="#e8c050" stroke-width="1.8" stroke-linecap="round"/><circle cx="6.4" cy="6.2" r="5.4" fill="#e4eefb" stroke="#7a8aa0" stroke-width="1.3"/><path d="M3.4 6.2h6M6.4 3.2v6" stroke="#2f4f9a" stroke-width="1.8"/></g>
<g transform="translate(244.00,88.60)"><path d="M10 10l4.6 4.4" stroke="#7a5a10" stroke-width="3.4" stroke-linecap="round"/><path d="M10.4 10.4l4 3.8" stroke="#e8c050" stroke-width="1.8" stroke-linecap="round"/><circle cx="6.4" cy="6.2" r="5.4" fill="#e4eefb" stroke="#7a8aa0" stroke-width="1.3"/><path d="M3.4 6.2h6" stroke="#2f4f9a" stroke-width="1.8"/></g>
<g transform="translate(267.00,88.60)"><rect x="4.2" y="0.4" width="11.4" height="7" fill="#fff" stroke="#405078" stroke-width="1"/><text x="9.9" y="6" font-size="5.6" font-weight="bold" text-anchor="middle" fill="#203060">100</text><path d="M6.4 11.6l3.4 3" stroke="#d09030" stroke-width="2.6" stroke-linecap="round"/><circle cx="4.2" cy="9.6" r="3.4" fill="#eef4fc" stroke="#98a4b8" stroke-width="1"/></g>
<g transform="translate(295.00,88.60)"><path d="M0.6 3l2.4 2.4-2.4 2.4" fill="#c8c8c8"/><path d="M1.6 15l13-13" stroke="#c0c0c0" stroke-width="1.1"/><path d="M6.6 10.4l6-5.4 3 3.4-6 5.2z" fill="#cfcfcf" stroke="#bdbdbd" stroke-width="0.8"/></g>
<g transform="translate(315.00,88.60)"><path d="M4.2 6.6h7.6l-3.8 4z" fill="#a4a4a4"/></g>
<g transform="translate(339.00,88.60)"><path d="M0.8 3.4h5l1.2 1.4h7v10H0.8z" fill="#d6d6d6" stroke="#b6b6b6" stroke-width="1"/><path d="M7 9.6q3.6-0.6 3.6-5H8.4L11.8 0.8l3.4 3.8H13q0 6.4-6 6.4z" fill="#c0c0c0" stroke="#acacac" stroke-width="0.7"/></g>
<g transform="translate(366.50,88.60)"><rect x="0.2" y="1" width="15.6" height="12.8" fill="#fafafa"/><rect x="0.6" y="1.6" width="4.3" height="5.2" fill="#b8b8b8"/><rect x="5.699999999999999" y="1.6" width="4.3" height="5.2" fill="#a8a8a8"/><rect x="10.799999999999999" y="1.6" width="4.3" height="5.2" fill="#989898"/><rect x="0.6" y="7.800000000000001" width="4.3" height="5.2" fill="#b0b0b0"/><rect x="5.699999999999999" y="7.800000000000001" width="4.3" height="5.2" fill="#a0a0a0"/><rect x="10.799999999999999" y="7.800000000000001" width="4.3" height="5.2" fill="#dedede"/></g>
<g transform="translate(386.50,88.60)"><path d="M4.2 6.6h7.6l-3.8 4z" fill="#a4a4a4"/></g>
<g transform="translate(405.00,88.60)"><text x="8" y="14.4" class="sf" font-weight="bold" font-size="17" text-anchor="middle" fill="#b4b4b4">A</text></g>
<g transform="translate(428.00,88.60)"><text x="5.6" y="11.6" font-size="14" font-weight="bold" text-anchor="middle" fill="#3a74c8">A</text><rect x="11" y="0.8" width="3" height="3" fill="#fff" stroke="#3a74c8" stroke-width="0.9"/><path d="M8.6 12.4l6-6.4" stroke="#f0dc20" stroke-width="2.2"/><path d="M4.6 15.4l4.4-3.6 1 1.4z" fill="#3a74c8"/></g>
<g transform="translate(447.00,88.60)"><path d="M4.2 6.6h7.6l-3.8 4z" fill="#000"/></g>
<path d="M58.5 88V106.5" stroke="#a0a0a0" stroke-width="1.1"/><path d="M59.6 88V106.5" stroke="#fafafa" stroke-width="1"/>
<path d="M86.6 88V106.5" stroke="#a0a0a0" stroke-width="1.1"/><path d="M87.69999999999999 88V106.5" stroke="#fafafa" stroke-width="1"/>
<path d="M114.4 88V106.5" stroke="#a0a0a0" stroke-width="1.1"/><path d="M115.5 88V106.5" stroke="#fafafa" stroke-width="1"/>
<path d="M165.5 88V106.5" stroke="#a0a0a0" stroke-width="1.1"/><path d="M166.6 88V106.5" stroke="#fafafa" stroke-width="1"/>
<path d="M216.5 88V106.5" stroke="#a0a0a0" stroke-width="1.1"/><path d="M217.6 88V106.5" stroke="#fafafa" stroke-width="1"/>
<path d="M290.5 88V106.5" stroke="#a0a0a0" stroke-width="1.1"/><path d="M291.6 88V106.5" stroke="#fafafa" stroke-width="1"/>
<path d="M333 88V106.5" stroke="#a0a0a0" stroke-width="1.1"/><path d="M334.1 88V106.5" stroke="#fafafa" stroke-width="1"/>
<path d="M361 88V106.5" stroke="#a0a0a0" stroke-width="1.1"/><path d="M362.1 88V106.5" stroke="#fafafa" stroke-width="1"/>
<rect x="712" y="33" width="22" height="22.200000000000003" fill="#f7f7f7"/><path d="M712.6 55.2V33.6H734" stroke="#9c9c9c" stroke-width="1.1" fill="none"/><path d="M713 54.7H733.5V34" stroke="#fff" stroke-width="1" fill="none"/>
<rect x="1031" y="33" width="22" height="22.200000000000003" fill="#f7f7f7"/><path d="M1031.6 55.2V33.6H1053" stroke="#9c9c9c" stroke-width="1.1" fill="none"/><path d="M1032 54.7H1052.5V34" stroke="#fff" stroke-width="1" fill="none"/>
<rect x="1054" y="33" width="22" height="22.200000000000003" fill="#f7f7f7"/><path d="M1054.6 55.2V33.6H1076" stroke="#9c9c9c" stroke-width="1.1" fill="none"/><path d="M1055 54.7H1075.5V34" stroke="#fff" stroke-width="1" fill="none"/>
<rect x="1077" y="33" width="22" height="22.200000000000003" fill="#f7f7f7"/><path d="M1077.6 55.2V33.6H1099" stroke="#9c9c9c" stroke-width="1.1" fill="none"/><path d="M1078 54.7H1098.5V34" stroke="#fff" stroke-width="1" fill="none"/>
<g transform="translate(631.60,36.20)"><path d="M4.2 1.2v12.2l3-2.8 2.2 4.6 1.9-0.9-2.2-4.4h4z" fill="#fff" stroke="#3d5f9e" stroke-width="1.1" stroke-linejoin="round"/></g>
<g transform="translate(654.30,36.20)"><path d="M6.2 9.8L4.4 7.6q-0.8-0.7-1.5-0.1q-0.5 0.7 0 1.5L5 12.6q1.3 2 3.4 2h1.4q2.6 0 3.2-2.4L13.4 6.6q0-0.9-0.85-0.9t-0.85 0.9V8.4V4.6q0-0.9-0.85-0.9t-0.85 0.9V8V3.8q0-0.9-0.85-0.9t-0.85 0.9V8V4.8q0-0.9-0.85-0.9t-0.85 0.9z" fill="#f2f2f2" stroke="#606060" stroke-width="1.05" stroke-linejoin="round"/></g>
<g transform="translate(677.00,36.20)"><circle cx="10.4" cy="5.8" r="5.3" fill="#cfe0f7" stroke="#5a8edc" stroke-width="1.1"/><rect x="0.8" y="3.2" width="8.8" height="8.8" fill="#c2d8f5" stroke="#4a82d6" stroke-width="1.2"/><path d="M5.2 8.4v6q2.8 1.7 5.8 0v-6" fill="#dce9fa" stroke="#5a8edc" stroke-width="1"/><ellipse cx="8.1" cy="8.4" rx="2.9" ry="1.4" fill="#f0f6fe" stroke="#5a8edc" stroke-width="0.9"/></g>
<g transform="translate(696.40,36.20)"><path d="M4.2 6.6h7.6l-3.8 4z" fill="#000"/></g>
<g transform="translate(715.50,36.20)"><rect x="0.8" y="1.4" width="14.6" height="13.6" fill="#f4f8fd" stroke="#3e5c96" stroke-width="1.1"/><path d="M1.4 7.6l3-3.4 3 3.4 3-3.6 3 3.6 1.4-1.6" stroke="#3568c0" stroke-width="1.1" fill="none"/><path d="M10.6 11.2l4 3.8" stroke="#e09a30" stroke-width="2.6" stroke-linecap="round"/><circle cx="8" cy="8.8" r="3.6" fill="#f4f8fd" stroke="#8a96a8" stroke-width="1.1"/></g>
<g transform="translate(738.00,36.20)"><rect x="0.8" y="1.4" width="14.6" height="13.6" fill="#f4f8fd" stroke="#3e5c96" stroke-width="1.1"/><path d="M1.4 6.6l2.6-2.8 2.6 3 2.8-4 2.8 4 2.8-2.6" stroke="#2c58b0" stroke-width="1.1" fill="none"/><path d="M4.6 0.6v9M11.6 0.6v9" stroke="#000" stroke-width="1" stroke-dasharray="1.4 1"/><path d="M3 10.6h3M7.6 10.6h6M3 12.8h3M7.6 12.8h6" stroke="#3e5c96" stroke-width="1"/></g>
<g transform="translate(761.00,36.20)"><rect x="0.8" y="1.4" width="14.6" height="13.6" fill="#f4f8fd" stroke="#3e5c96" stroke-width="1.1"/><path d="M2 13.4q8.6-0.6 12-10" stroke="#f08a20" stroke-width="1.3" fill="none"/><path d="M2 3h12" stroke="#2c68d8" stroke-width="1.2"/><path d="M0.4 3l3-2.2v4.4zM15.6 3l-3-2.2v4.4z" fill="#2c68d8"/></g>
<g transform="translate(784.00,36.20)"><rect x="0.8" y="1.4" width="14.6" height="13.6" fill="#f4f8fd" stroke="#3e5c96" stroke-width="1.1"/><path d="M2 13.4q8.6-0.6 12-10" stroke="#f08a20" stroke-width="1.3" fill="none"/><path d="M4.4 2.4v11.4" stroke="#2c68d8" stroke-width="1.2"/><path d="M4.4 0.2l-2.4 3.2h4.8zM4.4 15.8l-2.4-3.2h4.8z" fill="#2c68d8"/></g>
<g transform="translate(806.80,36.20)"><rect x="0.8" y="1.4" width="14.6" height="13.6" fill="#f4f8fd" stroke="#3e5c96" stroke-width="1.1"/><path d="M2 13.4q8.6-0.6 12-10" stroke="#f08a20" stroke-width="1.3" fill="none"/><path d="M2.4 2.4l5 5" stroke="#2c68d8" stroke-width="1.2"/><path d="M8.8 8.8l-4-1 3-3z" fill="#2c68d8"/></g>
<g transform="translate(829.80,36.20)"><rect x="0.8" y="1.4" width="14.6" height="13.6" fill="#f4f8fd" stroke="#3e5c96" stroke-width="1.1"/><path d="M2 13.4q8.6-0.6 12-10" stroke="#f08a20" stroke-width="1.3" fill="none"/><text x="6.4" y="10.6" class="sf" font-style="italic" font-weight="bold" font-size="12" text-anchor="middle" fill="#000">fx</text></g>
<g transform="translate(853.00,36.20)"><text x="8" y="14" class="sf" font-weight="bold" font-size="19.5" text-anchor="middle" fill="#000">T</text></g>
<g transform="translate(880.50,36.20)"><rect x="1" y="4" width="11" height="11" fill="#f4f8fd" stroke="#4a6cb0" stroke-width="1"/><rect x="1" y="4" width="11" height="2.2" fill="#5a8ae0"/><path d="M3 9h7M3 12h7" stroke="#4a6cb0" stroke-width="1.2"/><path d="M4.2 3.2l4-2.6q4-0.6 6 1v5.4h-3.2q-2.4 1.6-4.2-0.8z" fill="#e8b838" stroke="#8a6a18" stroke-width="0.7"/><rect x="14" y="0.8" width="1.8" height="6.4" fill="#2ca048"/><path d="M4.4 3.4l3.6 3.4M6 2.4l3.6 3.6M7.6 1.4l3 3" stroke="#6a5010" stroke-width="0.5"/></g>
<g transform="translate(909.00,36.20)"><path d="M5 2.2l6.8 5.7-6.8 5.7z" fill="#2fa32f" stroke="#1c7a1c" stroke-width="0.5"/></g>
<g transform="translate(932.50,36.20)"><rect x="3.6" y="3.6" width="8.8" height="8.8" fill="#dcdcdc" stroke="#c4c4c4" stroke-width="0.8"/></g>
<g transform="translate(955.60,36.20)"><rect x="4.4" y="3.6" width="2.6" height="8.8" fill="#dcdcdc" stroke="#bcbcbc" stroke-width="0.7"/><rect x="8.8" y="3.6" width="2.6" height="8.8" fill="#dcdcdc" stroke="#bcbcbc" stroke-width="0.7"/></g>
<g transform="translate(983.00,36.20)"><rect x="0.6" y="0.8" width="15" height="14.4" fill="#ece8da" stroke="#909090" stroke-width="0.9"/><rect x="8" y="8" width="7.4" height="7" fill="#fff"/><path d="M8 1v14M1 8h14" stroke="#b8b4a4" stroke-width="0.8"/><path d="M1.6 14.4l5-7 6-4.4 2.6-2" stroke="#d83848" stroke-width="1.3" fill="none"/><rect x="5" y="6.4" width="3" height="3" fill="#d83848" stroke="#d83848" stroke-width="0.9"/><rect x="10.4" y="2.4" width="3" height="3" fill="#d83848" stroke="#d83848" stroke-width="0.9"/></g>
<g transform="translate(1006.00,36.20)"><rect x="0.6" y="0.8" width="15" height="14.4" fill="#ece8da" stroke="#909090" stroke-width="0.9"/><rect x="8" y="8" width="7.4" height="7" fill="#fff"/><path d="M8 1v14M1 8h14" stroke="#b8b4a4" stroke-width="0.8"/><path d="M1.6 14.4l5-7 6-4.4 2.6-2" stroke="#d83848" stroke-width="1.3" fill="none"/><rect x="5" y="6.4" width="3" height="3" fill="#fff" stroke="#d83848" stroke-width="0.9"/><rect x="10.4" y="2.4" width="3" height="3" fill="#fff" stroke="#d83848" stroke-width="0.9"/></g>
<g transform="translate(1034.40,36.20)"><rect x="1" y="1.6" width="14" height="12.8" fill="#fdfdfd" stroke="#3e5c96" stroke-width="1.1"/><path d="M1 14.6h14" stroke="#3e5c96" stroke-width="1.6"/><path d="M5 3v9.6M7.4 3v9.6M9.8 3v9.6M12.2 3v9.6" stroke="#f08a18" stroke-width="1.2"/></g>
<g transform="translate(1057.50,36.20)"><rect x="1" y="1.6" width="14" height="12.8" fill="#fdfdfd" stroke="#3e5c96" stroke-width="1.1"/><path d="M1 14.6h14" stroke="#3e5c96" stroke-width="1.6"/><path d="M3.4 4h9.6M3.4 6.4h9.6M3.4 8.8h9.6M3.4 11.2h9.6" stroke="#f08a18" stroke-width="1.2"/></g>
<g transform="translate(1080.50,36.20)"><rect x="1" y="1.6" width="14" height="12.8" fill="#fdfdfd" stroke="#3e5c96" stroke-width="1.1"/><path d="M1 14.6h14" stroke="#3e5c96" stroke-width="1.6"/><path d="M6.4 3v9.6M9.4 3v9.6M12.2 3v9.6" stroke="#f08a18" stroke-width="1.2"/></g>
<g transform="translate(1107.80,36.20)"><circle cx="7.6" cy="7.6" r="7" fill="#c6dbf5" stroke="#6a7a94" stroke-width="1.1"/><path d="M2.6 6.4a5.4 5 0 0 1 10 0z" fill="#f6faff" opacity="0.8"/><text x="7.6" y="11" class="sf" font-weight="bold" font-size="11.5" text-anchor="middle" fill="#000">x</text><path d="M11 15.4l2-2.8 2 2.8z" fill="#f0a020" stroke="#c07810" stroke-width="0.5"/></g>
<g transform="translate(1130.90,36.20)"><circle cx="7.6" cy="7.6" r="7" fill="#c6dbf5" stroke="#6a7a94" stroke-width="1.1"/><path d="M2.6 6.4a5.4 5 0 0 1 10 0z" fill="#f6faff" opacity="0.8"/><text x="7.6" y="10" class="sf" font-weight="bold" font-size="11.5" text-anchor="middle" fill="#000">y</text><path d="M11 15.4l2-2.8 2 2.8z" fill="#f0a020" stroke="#c07810" stroke-width="0.5"/></g>
<g transform="translate(1153.70,36.20)"><circle cx="7.6" cy="7.6" r="7" fill="#c6dbf5" stroke="#6a7a94" stroke-width="1.1"/><path d="M2.6 6.4a5.4 5 0 0 1 10 0z" fill="#f6faff" opacity="0.8"/><text x="6.4" y="11" class="sf" font-style="italic" font-weight="bold" font-size="11" text-anchor="middle" fill="#222">f</text><text x="10" y="11.4" font-size="5.6" font-weight="bold" text-anchor="middle" fill="#222">x</text><path d="M11 15.4l2-2.8 2 2.8z" fill="#f0a020" stroke="#c07810" stroke-width="0.5"/></g>
<g transform="translate(1176.60,36.20)"><circle cx="7.6" cy="7.6" r="7" fill="#c6dbf5" stroke="#6a7a94" stroke-width="1.1"/><path d="M2.6 6.4a5.4 5 0 0 1 10 0z" fill="#f6faff" opacity="0.8"/><path d="M3.4 5.2h8.4M3.4 7.8h8.4M3.4 10.4h8.4" stroke="#e0183c" stroke-width="1.5"/><path d="M11 15.4l2-2.8 2 2.8z" fill="#f0a020" stroke="#c07810" stroke-width="0.5"/></g>
<g transform="translate(1204.90,36.20)"><rect x="0.8" y="4.6" width="13" height="10.6" fill="#fff" stroke="#4a70c0" stroke-width="1"/><rect x="0.8" y="4.6" width="13" height="2.6" fill="#5a84d8"/><path d="M5 7v8M9.4 7v8M1 9.8h12.6M1 12.4h12.6" stroke="#9ab4e4" stroke-width="1"/><path d="M7.6 6.6l5.6-5.8 3 2-5.6 6z" fill="#f2f4f8" stroke="#8a98b4" stroke-width="0.9"/></g>
<path d="M875 35V53.5" stroke="#a0a0a0" stroke-width="1.1"/><path d="M876.1 35V53.5" stroke="#fafafa" stroke-width="1"/>
<path d="M903.5 35V53.5" stroke="#a0a0a0" stroke-width="1.1"/><path d="M904.6 35V53.5" stroke="#fafafa" stroke-width="1"/>
<path d="M977.6 35V53.5" stroke="#a0a0a0" stroke-width="1.1"/><path d="M978.7 35V53.5" stroke="#fafafa" stroke-width="1"/>
<path d="M1028.4 35V53.5" stroke="#a0a0a0" stroke-width="1.1"/><path d="M1029.5 35V53.5" stroke="#fafafa" stroke-width="1"/>
<path d="M1102.5 35V53.5" stroke="#a0a0a0" stroke-width="1.1"/><path d="M1103.6 35V53.5" stroke="#fafafa" stroke-width="1"/>
<path d="M1199.6 35V53.5" stroke="#a0a0a0" stroke-width="1.1"/><path d="M1200.6999999999998 35V53.5" stroke="#fafafa" stroke-width="1"/>
<path d="M1227.5 35V53.5" stroke="#a0a0a0" stroke-width="1.1"/><path d="M1228.6 35V53.5" stroke="#fafafa" stroke-width="1"/>
<rect x="628" y="61" width="22" height="22" fill="#f7f7f7"/><path d="M628.6 83V61.6H650" stroke="#9c9c9c" stroke-width="1.1" fill="none"/><path d="M629 82.5H649.5V62" stroke="#fff" stroke-width="1" fill="none"/>
<rect x="957" y="61" width="22" height="22" fill="#f7f7f7"/><path d="M957.6 83V61.6H979" stroke="#9c9c9c" stroke-width="1.1" fill="none"/><path d="M958 82.5H978.5V62" stroke="#fff" stroke-width="1" fill="none"/>
<rect x="980" y="61" width="22" height="22" fill="#f7f7f7"/><path d="M980.6 83V61.6H1002" stroke="#9c9c9c" stroke-width="1.1" fill="none"/><path d="M981 82.5H1001.5V62" stroke="#fff" stroke-width="1" fill="none"/>
<g transform="translate(632.00,64.00)"><path d="M1 1.6h14M1 14.4h14" stroke="#909090" stroke-width="1"/><path d="M1 1.6v12.8" stroke="#909090" stroke-width="1"/><path d="M8.4 2v12" stroke="#000" stroke-width="1.1" stroke-dasharray="1.6 1.2"/><path d="M1.4 8.4h14" stroke="#0a8a0a" stroke-width="1.6"/><rect x="1.4" y="6.8" width="3.4" height="3.2" fill="#0a8a0a"/><rect x="12.2" y="6.8" width="3.4" height="3.2" fill="#0a8a0a"/><rect x="7" y="7" width="2.8" height="2.8" fill="#0a8a0a"/></g>
<g transform="translate(654.95,64.00)"><path d="M1 1.6h14M1 14.4h14" stroke="#909090" stroke-width="1"/><path d="M1 1.6v12.8" stroke="#909090" stroke-width="1"/><path d="M8.4 2v12" stroke="#000" stroke-width="1.1" stroke-dasharray="1.6 1.2"/><path d="M1.4 7.8h14" stroke="#0a8a0a" stroke-width="1.6"/><rect x="1.4" y="6.2" width="3.4" height="3.2" fill="#0a8a0a"/><rect x="12.2" y="6.2" width="3.4" height="3.2" fill="#0a8a0a"/></g>
<g transform="translate(677.90,64.00)"><path d="M1 1.6h14M1 14.4h14" stroke="#909090" stroke-width="1"/><path d="M1 1.6v12.8" stroke="#909090" stroke-width="1"/><path d="M8.6 2v12" stroke="#000" stroke-width="1.1" stroke-dasharray="1.6 1.2"/><path d="M2 14q1.6-10.6 6-10.6T15 14" stroke="#0a8a0a" stroke-width="1.3" fill="none"/></g>
<g transform="translate(700.85,64.00)"><path d="M1 1.6h14M1 14.4h14" stroke="#909090" stroke-width="1"/><path d="M1 1.6v12.8" stroke="#909090" stroke-width="1"/><path d="M8.6 2v12" stroke="#000" stroke-width="1.1" stroke-dasharray="1.6 1.2"/><path d="M2 2q1.6 10.6 6.4 10.6T15 2" stroke="#0a8a0a" stroke-width="1.3" fill="none"/></g>
<g transform="translate(723.80,64.00)"><path d="M1 1.6h14M1 14.4h14" stroke="#909090" stroke-width="1"/><path d="M1 1.6v12.8" stroke="#909090" stroke-width="1"/><path d="M11.6 2v12" stroke="#000" stroke-width="1.1" stroke-dasharray="1.6 1.2"/><path d="M1.6 10.6l2-2.2 2.6 5 3.2-7.6q2-4.2 3.6 0l2 5.4" stroke="#0a8a0a" stroke-width="1.3" fill="none"/></g>
<g transform="translate(746.75,64.00)"><path d="M1 1.6h14M1 14.4h14" stroke="#909090" stroke-width="1"/><path d="M1 1.6v12.8" stroke="#909090" stroke-width="1"/><path d="M11.6 2v12" stroke="#000" stroke-width="1.1" stroke-dasharray="1.6 1.2"/><path d="M1.6 6.4l2.6-3.6q1.4-1.2 2.4 0.8l3 7.6q1.8 3.6 3.4 0l2.4-6" stroke="#0a8a0a" stroke-width="1.3" fill="none"/></g>
<g transform="translate(769.70,64.00)"><path d="M1 1.6h14M1 14.4h14" stroke="#909090" stroke-width="1"/><path d="M1 1.6v12.8" stroke="#909090" stroke-width="1"/><path d="M8 2v12" stroke="#000" stroke-width="1.1" stroke-dasharray="1.6 1.2"/><path d="M1.6 13.6l3-1.6 7.6-9.6h3" stroke="#0a8a0a" stroke-width="1.3" fill="none"/></g>
<g transform="translate(792.65,64.00)"><path d="M1 1.6h14M1 14.4h14" stroke="#909090" stroke-width="1"/><path d="M1 1.6v12.8" stroke="#909090" stroke-width="1"/><path d="M4.4 2v12" stroke="#000" stroke-width="1.1" stroke-dasharray="1.6 1.2"/><path d="M1.6 9.6q3-7.6 5.6-5.4l6 10M2.6 13.6l5.6-7q3.6-4 7.2 1.6" stroke="#0a8a0a" stroke-width="1.2" fill="none"/></g>
<g transform="translate(815.60,64.00)"><path d="M1 1.6h14M1 14.4h14" stroke="#909090" stroke-width="1"/><path d="M1 1.6v12.8" stroke="#909090" stroke-width="1"/><path d="M4.4 2v12" stroke="#000" stroke-width="1.1" stroke-dasharray="1.6 1.2"/><path d="M1.6 2.4l6 8q3 3 7.6-1.4M2.6 13.4q4.6-4 7.2-9.6l2.4-1.6" stroke="#0a8a0a" stroke-width="1.2" fill="none"/></g>
<g transform="translate(838.55,64.00)"><path d="M1 1.6h14M1 14.4h14" stroke="#909090" stroke-width="1"/><path d="M1 1.6v12.8" stroke="#909090" stroke-width="1"/><path d="M8.4 2v12" stroke="#000" stroke-width="1.1" stroke-dasharray="1.6 1.2"/><path d="M1.4 2.6l7 4 7-4" stroke="#0a8a0a" stroke-width="1.2" fill="none"/><path d="M1.4 5.6l7 4 7-4" stroke="#0a8a0a" stroke-width="1.2" fill="none"/><path d="M1.4 8.6l7 4 7-4" stroke="#0a8a0a" stroke-width="1.2" fill="none"/><path d="M6.6 12.6h3.6l-1.8 2z" fill="#000"/></g>
<g transform="translate(861.50,64.00)"><path d="M1 1.6h14M1 14.4h14" stroke="#909090" stroke-width="1"/><path d="M1 1.6v12.8" stroke="#909090" stroke-width="1"/><path d="M8.4 2v12" stroke="#000" stroke-width="1.1" stroke-dasharray="1.6 1.2"/><path d="M1.4 7.4l7-4 7 4" stroke="#0a8a0a" stroke-width="1.2" fill="none"/><path d="M1.4 10.4l7-4 7 4" stroke="#0a8a0a" stroke-width="1.2" fill="none"/><path d="M1.4 13.4l7-4 7 4" stroke="#0a8a0a" stroke-width="1.2" fill="none"/><path d="M6.6 3.6h3.6l-1.8-2z" fill="#000"/></g>
<g transform="translate(889.00,64.00)"><rect x="0.6" y="1.6" width="10.4" height="11.4" rx="1" fill="#e8b83c" stroke="#8a6a18" stroke-width="0.9"/><rect x="3.4" y="0.4" width="4.8" height="2.8" fill="#c8c8c8" stroke="#707070" stroke-width="0.7"/><rect x="5.6" y="6.6" width="10" height="8.8" fill="#fff" stroke="#4a70c0" stroke-width="1"/><rect x="5.6" y="6.6" width="10" height="2" fill="#5a84d8"/><path d="M7.4 12l1.2-1.2 1.2 1.2 1.2-1.2 1.2 1.2 1.2-1.2" stroke="#d02828" stroke-width="1" fill="none"/></g>
<g transform="translate(908.00,64.00)"><path d="M4.2 6.6h7.6l-3.8 4z" fill="#000"/></g>
<g transform="translate(932.00,64.00)"><rect x="2" y="1.4" width="12" height="12.6" fill="#fff" stroke="#3e68c0" stroke-width="1"/><rect x="2" y="1.4" width="12" height="2.4" fill="#4a84e0"/><path d="M3.8 6h8.4M3.8 8.2h8.4M3.8 10.4h8.4M3.8 12.4h6" stroke="#3e5c96" stroke-width="1"/></g>
<g transform="translate(961.30,64.00)"><rect x="4" y="4.4" width="8.4" height="7.6" fill="#d8e6f8" stroke="#7a98c8" stroke-width="0.8"/><path d="M4.8 10.4l2.4-2.6 1.4 1 2.8-3" stroke="#e02828" stroke-width="1.1" fill="none"/><path d="M1 2.2h14M1 14h14" stroke="#000" stroke-width="1.3"/><path d="M0 2.2l2.6-1.8v3.6zM16 2.2l-2.6-1.8v3.6zM0 14l2.6-1.8v3.6zM16 14l-2.6-1.8v3.6z" fill="#000"/><path d="M0.6 8.2h3M12.6 8.2h3" stroke="#000" stroke-width="1.1"/><path d="M0 8.2l2-1.4v2.8zM16 8.2l-2-1.4v2.8z" fill="#000"/></g>
<g transform="translate(983.50,64.00)"><rect x="4" y="4.4" width="8.4" height="7.6" fill="#d8e6f8" stroke="#7a98c8" stroke-width="0.8"/><path d="M4.8 10.4l2.4-2.6 1.4 1 2.8-3" stroke="#e02828" stroke-width="1.1" fill="none"/><path d="M2 1v14M14.4 1v14" stroke="#000" stroke-width="1.3"/><path d="M2 0l-1.8 2.6h3.6zM2 16l-1.8-2.6h3.6zM14.4 0l-1.8 2.6h3.6zM14.4 16l-1.8-2.6h3.6z" fill="#000"/><path d="M8.2 0.6v3.4M8.2 12.4v3" stroke="#000" stroke-width="1.1"/><path d="M8.2 0l-1.4 2h2.8zM8.2 16l-1.4-2h2.8z" fill="#000"/></g>
<g transform="translate(1010.00,64.00)"><path d="M10 10l4.6 4.4" stroke="#7a5a10" stroke-width="3.4" stroke-linecap="round"/><path d="M10.4 10.4l4 3.8" stroke="#e8c050" stroke-width="1.8" stroke-linecap="round"/><circle cx="6.4" cy="6.2" r="5.4" fill="#e4eefb" stroke="#7a8aa0" stroke-width="1.3"/><path d="M3.4 6.2h6M6.4 3.2v6" stroke="#2f4f9a" stroke-width="1.8"/></g>
<g transform="translate(1033.00,64.00)"><path d="M10 10l4.6 4.4" stroke="#7a5a10" stroke-width="3.4" stroke-linecap="round"/><path d="M10.4 10.4l4 3.8" stroke="#e8c050" stroke-width="1.8" stroke-linecap="round"/><circle cx="6.4" cy="6.2" r="5.4" fill="#e4eefb" stroke="#7a8aa0" stroke-width="1.3"/><path d="M3.4 6.2h6" stroke="#2f4f9a" stroke-width="1.8"/></g>
<g transform="translate(1062.00,64.00)"><text x="5.6" y="11.6" font-size="14" font-weight="bold" text-anchor="middle" fill="#3a74c8">A</text><rect x="11" y="0.8" width="3" height="3" fill="#fff" stroke="#3a74c8" stroke-width="0.9"/><path d="M8.6 12.4l6-6.4" stroke="#f0dc20" stroke-width="2.2"/><path d="M4.6 15.4l4.4-3.6 1 1.4z" fill="#3a74c8"/></g>
<g transform="translate(1081.60,64.00)"><path d="M4.2 6.6h7.6l-3.8 4z" fill="#000"/></g>
<g transform="translate(1104.50,64.00)"><rect x="0.8" y="1" width="7" height="7" fill="#e6e6e6" stroke="#c0c0c0" stroke-width="1"/><rect x="9" y="9.4" width="6" height="5.6" fill="#dadada" stroke="#b8b8b8" stroke-width="1"/><rect x="4" y="4" width="8.4" height="8.4" fill="#d6d6d6" stroke="#b0b0b0" stroke-width="1"/></g>
<g transform="translate(1127.60,64.00)"><rect x="4" y="4" width="7.4" height="7.4" fill="#d8d8d8" stroke="#b4b4b4" stroke-width="1"/><rect x="0.8" y="1" width="6" height="6" fill="#ececec" stroke="#bcbcbc" stroke-width="1"/><rect x="8.6" y="8.8" width="6.4" height="6.2" fill="#e2e2e2" stroke="#b4b4b4" stroke-width="1"/></g>
<path d="M883.5 63V81.5" stroke="#a0a0a0" stroke-width="1.1"/><path d="M884.6 63V81.5" stroke="#fafafa" stroke-width="1"/>
<path d="M926.8 63V81.5" stroke="#a0a0a0" stroke-width="1.1"/><path d="M927.9 63V81.5" stroke="#fafafa" stroke-width="1"/>
<path d="M954.5 63V81.5" stroke="#a0a0a0" stroke-width="1.1"/><path d="M955.6 63V81.5" stroke="#fafafa" stroke-width="1"/>
<path d="M1005.5 63V81.5" stroke="#a0a0a0" stroke-width="1.1"/><path d="M1006.6 63V81.5" stroke="#fafafa" stroke-width="1"/>
<path d="M1056.4 63V81.5" stroke="#a0a0a0" stroke-width="1.1"/><path d="M1057.5 63V81.5" stroke="#fafafa" stroke-width="1"/>
<path d="M1099.4 63V81.5" stroke="#a0a0a0" stroke-width="1.1"/><path d="M1100.5 63V81.5" stroke="#fafafa" stroke-width="1"/>
<path d="M171.5 156.5L171.5 144.5L417.5 144.5L417.5 174.5" stroke="#008000" stroke-width="1.12" fill="none"/>
<path d="M417.5 210.5L417.5 396.5L171.5 396.5L171.5 360.5" stroke="#008000" stroke-width="1.12" fill="none"/>
<path d="M201.5 144.5L201.5 156.5" stroke="#008000" stroke-width="1.12" fill="none"/>
<path d="M27.5 180.5L27.5 204.5" stroke="#008000" stroke-width="1.12" fill="none"/>
<path d="M27.5 204.5L57.5 204.5" stroke="#008000" stroke-width="1.12" fill="none"/>
<path d="M129.5 204.5L261.5 204.5" stroke="#008000" stroke-width="1.12" fill="none"/>
<path d="M297.5 204.5L303.5 204.5" stroke="#008000" stroke-width="1.12" fill="none"/>
<path d="M135.5 204.5L135.5 216.5" stroke="#008000" stroke-width="1.12" fill="none"/>
<path d="M135.5 264.5L160 264.5" stroke="#008000" stroke-width="1.12" fill="none"/>
<path d="M171.5 192.5L171.5 246.5" stroke="#008000" stroke-width="1.12" fill="none"/>
<path d="M171.5 282.5L171.5 324.5" stroke="#008000" stroke-width="1.12" fill="none"/>
<path d="M201.5 192.5L201.5 330.5" stroke="#008000" stroke-width="1.12" fill="none"/>
<path d="M201.5 366.5L201.5 396.5" stroke="#008000" stroke-width="1.12" fill="none"/>
<path d="M249.5 252.5L249.5 180.5L327.5 180.5" stroke="#008000" stroke-width="1.12" fill="none"/>
<path d="M27.5 270.5L27.5 282.5" stroke="#008000" stroke-width="1.12" fill="none"/>
<path d="M27.5 318.5L27.5 324.5" stroke="#008000" stroke-width="1.12" fill="none"/>
<path d="M303.5 204.5L303.5 222.5" stroke="#008000" stroke-width="1.12" fill="none"/>
<path d="M303.5 258.5L303.5 264.5L333.5 264.5" stroke="#008000" stroke-width="1.12" fill="none"/>
<path d="M327.5 216.5L327.5 270.5" stroke="#008000" stroke-width="1.12" fill="none"/>
<path d="M327.5 306.5L327.5 354.5" stroke="#008000" stroke-width="1.12" fill="none"/>
<path d="M327.5 390.5L327.5 396.5" stroke="#008000" stroke-width="1.12" fill="none"/>
<path d="M369.5 264.5L381.5 264.5" stroke="#008000" stroke-width="1.12" fill="none"/>
<path d="M375.5 300.5L375.5 318.5L327.5 318.5" stroke="#008000" stroke-width="1.12" fill="none"/>
<path d="M297.5 294.5L303.5 294.5" stroke="#008000" stroke-width="1.12" fill="none"/>
<path d="M243.5 294.5L261.5 294.5" stroke="#008000" stroke-width="1.12" fill="none"/>
<path d="M201.5 294.5L207.5 294.5" stroke="#008000" stroke-width="1.12" fill="none"/>
<path d="M303.5 294.5L303.5 312.5" stroke="#008000" stroke-width="1.12" fill="none"/>
<path d="M220 348.5L327.5 348.5" stroke="#008000" stroke-width="1.12" fill="none"/>
<path d="M375.5 390.5L375.5 396.5" stroke="#008000" stroke-width="1.12" fill="none"/>
<path d="M24 131.5L31 131.5" stroke="#0000ff" stroke-width="1.25" fill="none"/>
<path d="M21 135.5L34 135.5" stroke="#0000ff" stroke-width="1.25" fill="none"/>
<path d="M27.5 135.5L27.5 153.5" stroke="#0000ff" stroke-width="1.25" fill="none"/>
<path d="M27.5 171.5L27.5 180.5" stroke="#0000ff" stroke-width="1.25" fill="none"/>
<circle cx="27.5" cy="162.5" r="9" stroke="#0000ff" stroke-width="1.25" fill="#fff"/>
<path d="M23 162.6 q2.2 3.6 4.5 0.2 t4.6 -0.6" stroke="#0000ff" stroke-width="1.1" fill="none"/>
<path d="M31 149.5L35 149.5" stroke="#0000ff" stroke-width="1.25" fill="none"/>
<path d="M31 175.5L35 175.5" stroke="#0000ff" stroke-width="1.0" fill="none"/>
<path d="M33 173.5L33 177.5" stroke="#0000ff" stroke-width="1.0" fill="none"/>
<path d="M27.5 234.5L27.5 243" stroke="#0000ff" stroke-width="1.25" fill="none"/>
<circle cx="27.5" cy="251.5" r="9" stroke="#0000ff" stroke-width="1.25" fill="#fff"/>
<path d="M27.5 260.5L27.5 270.5" stroke="#0000ff" stroke-width="1.25" fill="none"/>
<path d="M20 240L24 240" stroke="#0000ff" stroke-width="1.0" fill="none"/>
<path d="M22 238L22 242" stroke="#0000ff" stroke-width="1.0" fill="none"/>
<path d="M20 265.5L24 265.5" stroke="#0000ff" stroke-width="1.25" fill="none"/>
<path d="M27.5 282.5L27.5 291.5" stroke="#0000ff" stroke-width="1.25" fill="none"/>
<circle cx="27.5" cy="300" r="9" stroke="#0000ff" stroke-width="1.25" fill="#fff"/>
<path d="M27.5 309L27.5 318.5" stroke="#0000ff" stroke-width="1.25" fill="none"/>
<path d="M20 287L24 287" stroke="#0000ff" stroke-width="1.25" fill="none"/>
<path d="M20 313.5L24 313.5" stroke="#0000ff" stroke-width="1.0" fill="none"/>
<path d="M22 311.5L22 315.5" stroke="#0000ff" stroke-width="1.0" fill="none"/>
<path d="M27.5 324.5L27.5 333.5" stroke="#0000ff" stroke-width="1.25" fill="none"/>
<path d="M21.0 333.5L34.0 333.5" stroke="#0000ff" stroke-width="1.25" fill="none"/>
<path d="M24.0 338.2L31.0 338.2" stroke="#0000ff" stroke-width="1.25" fill="none"/>
<path d="M57.5 204.5L93.5 204.5" stroke="#0000ff" stroke-width="1.25" fill="none"/>
<rect x="66.5" y="201.5" width="18" height="6" stroke="#0000ff" stroke-width="1.25" fill="#fff"/>
<path d="M93.5 204.5L110.5 204.5" stroke="#0000ff" stroke-width="1.25" fill="none"/>
<path d="M113.4 204.5L129.5 204.5" stroke="#0000ff" stroke-width="1.25" fill="none"/>
<path d="M110.5 198L110.5 211" stroke="#0000ff" stroke-width="1.25" fill="none"/>
<path d="M113.4 198L113.4 211" stroke="#0000ff" stroke-width="1.25" fill="none"/>
<path d="M135.5 216.5L135.5 252.5" stroke="#0000ff" stroke-width="1.25" fill="none"/>
<rect x="132.5" y="225.5" width="6" height="18" stroke="#0000ff" stroke-width="1.25" fill="#fff"/>
<path d="M135.5 252.5L135.5 293" stroke="#0000ff" stroke-width="1.25" fill="none"/>
<path d="M129 293L142 293" stroke="#0000ff" stroke-width="1.25" fill="none"/>
<path d="M129 296L142 296" stroke="#0000ff" stroke-width="1.25" fill="none"/>
<path d="M135.5 296L135.5 321.5" stroke="#0000ff" stroke-width="1.25" fill="none"/>
<path d="M129.0 321.5L142.0 321.5" stroke="#0000ff" stroke-width="1.25" fill="none"/>
<path d="M132.0 326.2L139.0 326.2" stroke="#0000ff" stroke-width="1.25" fill="none"/>
<path d="M160 264.5L167.5 264.5" stroke="#0000ff" stroke-width="1.25" fill="none"/>
<path d="M168.3 264.5L164.3 262.3L164.3 266.7Z" fill="#0000ff"/>
<path d="M171.5 156.5L171.5 192.5" stroke="#0000ff" stroke-width="1.25" fill="none"/>
<rect x="168.5" y="165.5" width="6" height="18" stroke="#0000ff" stroke-width="1.25" fill="#fff"/>
<path d="M201.5 156.5L201.5 192.5" stroke="#0000ff" stroke-width="1.25" fill="none"/>
<rect x="198.5" y="165.5" width="6" height="18" stroke="#0000ff" stroke-width="1.25" fill="#fff"/>
<path d="M171.5 246.5L171.5 282.5" stroke="#0000ff" stroke-width="1.25" fill="none"/>
<rect x="168.5" y="255.5" width="6" height="18" stroke="#0000ff" stroke-width="1.25" fill="#fff"/>
<path d="M171.5 324.5L171.5 360.5" stroke="#0000ff" stroke-width="1.25" fill="none"/>
<rect x="168.5" y="333.5" width="6" height="18" stroke="#0000ff" stroke-width="1.25" fill="#fff"/>
<path d="M327.5 144.5L327.5 180.5" stroke="#0000ff" stroke-width="1.25" fill="none"/>
<rect x="324.5" y="153.5" width="6" height="18" stroke="#0000ff" stroke-width="1.25" fill="#fff"/>
<path d="M261.5 204.5L297.5 204.5" stroke="#0000ff" stroke-width="1.25" fill="none"/>
<rect x="270.5" y="201.5" width="18" height="6" stroke="#0000ff" stroke-width="1.25" fill="#fff"/>
<path d="M207.5 294.5L243.5 294.5" stroke="#0000ff" stroke-width="1.25" fill="none"/>
<rect x="216.5" y="291.5" width="18" height="6" stroke="#0000ff" stroke-width="1.25" fill="#fff"/>
<path d="M261.5 294.5L297.5 294.5" stroke="#0000ff" stroke-width="1.25" fill="none"/>
<rect x="270.5" y="291.5" width="18" height="6" stroke="#0000ff" stroke-width="1.25" fill="#fff"/>
<path d="M333.5 264.5L369.5 264.5" stroke="#0000ff" stroke-width="1.25" fill="none"/>
<rect x="342.5" y="261.5" width="18" height="6" stroke="#0000ff" stroke-width="1.25" fill="#fff"/>
<path d="M249.5 252.5L249.5 269.0" stroke="#0000ff" stroke-width="1.25" fill="none"/>
<path d="M249.5 272.0L249.5 294.5" stroke="#0000ff" stroke-width="1.25" fill="none"/>
<path d="M243.0 269.0L256.0 269.0" stroke="#0000ff" stroke-width="1.25" fill="none"/>
<path d="M243.0 272.0L256.0 272.0" stroke="#0000ff" stroke-width="1.25" fill="none"/>
<path d="M375.5 264.5L375.5 281.0" stroke="#0000ff" stroke-width="1.25" fill="none"/>
<path d="M375.5 284.0L375.5 300.5" stroke="#0000ff" stroke-width="1.25" fill="none"/>
<path d="M369.0 281.0L382.0 281.0" stroke="#0000ff" stroke-width="1.25" fill="none"/>
<path d="M369.0 284.0L382.0 284.0" stroke="#0000ff" stroke-width="1.25" fill="none"/>
<path d="M381.5 264.5L390.5 264.5" stroke="#0000ff" stroke-width="1.25" fill="none"/>
<path d="M390.5 258.2L390.5 270.8" stroke="#0000ff" stroke-width="1.25" fill="none"/>
<path d="M395.5 261L395.5 268" stroke="#0000ff" stroke-width="1.25" fill="none"/>
<path d="M417.5 174.5L417.5 191.3" stroke="#0000ff" stroke-width="1.25" fill="none"/>
<path d="M417.5 194.3L417.5 210.5" stroke="#0000ff" stroke-width="1.25" fill="none"/>
<path d="M411.8 191.3L423.2 191.3" stroke="#0000ff" stroke-width="1.25" fill="none"/>
<path d="M415 194.3L420.8 194.3" stroke="#0000ff" stroke-width="1.25" fill="none"/>
<path d="M303.5 222.5L303.5 236.5" stroke="#0000ff" stroke-width="1.25" fill="none"/>
<path d="M303.5 243.5L303.5 258.5" stroke="#0000ff" stroke-width="1.25" fill="none"/>
<path d="M303.5 236.3L310.1 243.7L296.9 243.7Z" fill="#0000ff"/>
<path d="M296.7 239.3L296.7 236.5L310.3 236.5L310.3 233.9" stroke="#0000ff" stroke-width="1.5" fill="none"/>
<path d="M303.5 312.5L303.5 326.5" stroke="#0000ff" stroke-width="1.25" fill="none"/>
<path d="M303.5 333.5L303.5 348.5" stroke="#0000ff" stroke-width="1.25" fill="none"/>
<path d="M303.5 326.3L310.1 333.7L296.9 333.7Z" fill="#0000ff"/>
<path d="M296.7 329.3L296.7 326.5L310.3 326.5L310.3 323.9" stroke="#0000ff" stroke-width="1.5" fill="none"/>
<path d="M327.5 180.5L327.5 192.5" stroke="#0000ff" stroke-width="1.25" fill="none"/>
<path d="M327.5 192.5L321.0 192.5" stroke="#0000ff" stroke-width="1.25" fill="none"/>
<path d="M321.0 190.0L321.0 207.0" stroke="#0000ff" stroke-width="1.5" fill="none"/>
<path d="M317.5 192.0L317.5 204.5" stroke="#0000ff" stroke-width="1.4" fill="none"/>
<path d="M303.5 204.5L317.5 204.5" stroke="#0000ff" stroke-width="1.25" fill="none"/>
<path d="M321.0 198.5L327.5 198.5" stroke="#0000ff" stroke-width="1.25" fill="none"/>
<path d="M327.5 198.5L327.5 216.5" stroke="#0000ff" stroke-width="1.25" fill="none"/>
<path d="M321.0 205.5L327.5 205.5" stroke="#0000ff" stroke-width="1.25" fill="none"/>
<path d="M321.9 198.5L325.1 195.9L325.1 201.1Z" fill="#0000ff"/>
<path d="M327.5 270.5L327.5 282.5" stroke="#0000ff" stroke-width="1.25" fill="none"/>
<path d="M327.5 282.5L321.0 282.5" stroke="#0000ff" stroke-width="1.25" fill="none"/>
<path d="M321.0 280.0L321.0 297.0" stroke="#0000ff" stroke-width="1.5" fill="none"/>
<path d="M317.5 282.0L317.5 294.5" stroke="#0000ff" stroke-width="1.4" fill="none"/>
<path d="M303.5 294.5L317.5 294.5" stroke="#0000ff" stroke-width="1.25" fill="none"/>
<path d="M321.0 288.5L327.5 288.5" stroke="#0000ff" stroke-width="1.25" fill="none"/>
<path d="M327.5 288.5L327.5 306.5" stroke="#0000ff" stroke-width="1.25" fill="none"/>
<path d="M321.0 295.5L327.5 295.5" stroke="#0000ff" stroke-width="1.25" fill="none"/>
<path d="M321.9 288.5L325.1 285.9L325.1 291.1Z" fill="#0000ff"/>
<path d="M327.5 354.5L327.5 390.5" stroke="#0000ff" stroke-width="1.25" fill="none"/>
<rect x="324.5" y="363.5" width="6" height="18" stroke="#0000ff" stroke-width="1.25" fill="#fff"/>
<path d="M375.5 354.5L375.5 390.5" stroke="#0000ff" stroke-width="1.25" fill="none"/>
<rect x="372.5" y="363.5" width="6" height="18" stroke="#0000ff" stroke-width="1.25" fill="#fff"/>
<path d="M327.5 348.5L345 348.5" stroke="#0000ff" stroke-width="1.25" fill="none"/>
<path d="M345 348.5L357 354.5" stroke="#0000ff" stroke-width="1.25" fill="none"/>
<path d="M357 354.5L375.5 354.5L375.5 360" stroke="#0000ff" stroke-width="1.25" fill="none"/>
<circle cx="345" cy="348.3" r="1.3" fill="#0000ff"/><circle cx="357" cy="354.3" r="1.3" fill="#0000ff"/>
<path d="M357 342.5L370 342.5" stroke="#0000ff" stroke-width="1.25" fill="none"/>
<path d="M355.5 342.5L359.5 340.6L359.5 344.4Z" fill="#0000ff"/>
<path d="M201.5 330.5L201.5 339.5L209 346.2" stroke="#0000ff" stroke-width="1.25" fill="none"/>
<path d="M209 339L209 357.8" stroke="#0000ff" stroke-width="1.8" fill="none"/>
<path d="M209 348.5L220 348.5" stroke="#0000ff" stroke-width="1.25" fill="none"/>
<path d="M209 351.8L201.5 355.8L201.5 366.5" stroke="#0000ff" stroke-width="1.25" fill="none"/>
<path d="M201.6 355.8L205.8 351.8L206.8 355.4Z" fill="#0000ff"/>
<circle cx="27.5" cy="204.5" r="2.6" fill="#ff0000"/>
<circle cx="135.5" cy="204.5" r="2.6" fill="#ff0000"/>
<circle cx="201.5" cy="144.5" r="2.6" fill="#ff0000"/>
<circle cx="327.5" cy="144.5" r="2.6" fill="#ff0000"/>
<circle cx="327.5" cy="180.5" r="2.6" fill="#ff0000"/>
<circle cx="303.5" cy="204.5" r="2.6" fill="#ff0000"/>
<circle cx="327.5" cy="216.5" r="2.6" fill="#ff0000"/>
<circle cx="135.5" cy="264.5" r="2.6" fill="#ff0000"/>
<circle cx="309.5" cy="264.5" r="2.6" fill="#ff0000"/>
<circle cx="327.5" cy="264.5" r="2.6" fill="#ff0000"/>
<circle cx="375.5" cy="264.5" r="2.6" fill="#ff0000"/>
<circle cx="201.5" cy="294.5" r="2.6" fill="#ff0000"/>
<circle cx="249.5" cy="294.5" r="2.6" fill="#ff0000"/>
<circle cx="303.5" cy="294.5" r="2.6" fill="#ff0000"/>
<circle cx="327.5" cy="306.5" r="2.6" fill="#ff0000"/>
<circle cx="327.5" cy="318.5" r="2.6" fill="#ff0000"/>
<circle cx="303.5" cy="348.5" r="2.6" fill="#ff0000"/>
<circle cx="327.5" cy="348.5" r="2.6" fill="#ff0000"/>
<circle cx="201.5" cy="396.5" r="2.6" fill="#ff0000"/>
<circle cx="327.5" cy="396.5" r="2.6" fill="#ff0000"/>
<circle cx="375.5" cy="396.5" r="2.6" fill="#ff0000"/>
<text x="39" y="183.88" font-size="9.3" fill="#168a16" textLength="11.00" lengthAdjust="spacingAndGlyphs">V1</text>
<text x="68" y="192.88" font-size="9.3" fill="#168a16" textLength="9.00" lengthAdjust="spacingAndGlyphs">Ri</text>
<text x="70" y="218.88" font-size="9.3" fill="#168a16" textLength="13.00" lengthAdjust="spacingAndGlyphs">50</text>
<text x="107" y="194.88" font-size="9.3" fill="#168a16" textLength="13.00" lengthAdjust="spacingAndGlyphs">C1</text>
<text x="104" y="222.88" font-size="9.3" fill="#168a16" textLength="19.50" lengthAdjust="spacingAndGlyphs">22u</text>
<text x="114" y="237.38" font-size="9.3" fill="#168a16" textLength="13.00" lengthAdjust="spacingAndGlyphs">R1</text>
<text x="104.5" y="248.58" font-size="9.3" fill="#168a16" textLength="24.50" lengthAdjust="spacingAndGlyphs">100k</text>
<text x="178.5" y="172.88" font-size="9.3" fill="#168a16" textLength="13.50" lengthAdjust="spacingAndGlyphs">R2</text>
<text x="179.5" y="182.88" font-size="9.3" fill="#168a16" textLength="11.80" lengthAdjust="spacingAndGlyphs">1k</text>
<text x="209.5" y="172.88" font-size="9.3" fill="#168a16" textLength="12.50" lengthAdjust="spacingAndGlyphs">R5</text>
<text x="208.8" y="182.88" font-size="9.3" fill="#168a16" textLength="22.50" lengthAdjust="spacingAndGlyphs">3.9k</text>
<text x="272.7" y="197.38" font-size="9.3" fill="#168a16" textLength="10.80" lengthAdjust="spacingAndGlyphs">R7</text>
<text x="270" y="218.58" font-size="9.3" fill="#168a16" textLength="19.50" lengthAdjust="spacingAndGlyphs">100</text>
<text x="41" y="247.88" font-size="9.3" fill="#168a16" textLength="11.00" lengthAdjust="spacingAndGlyphs">V2</text>
<text x="41" y="266.88" font-size="9.3" fill="#168a16" textLength="85.00" lengthAdjust="spacingAndGlyphs">AC 1 Sin 0 asin 20k</text>
<text x="44" y="298.38" font-size="9.3" fill="#168a16" textLength="11.00" lengthAdjust="spacingAndGlyphs">V3</text>
<text x="42" y="312.38" font-size="9.3" fill="#168a16" textLength="89.00" lengthAdjust="spacingAndGlyphs">AC 1 Sin 0 ASIN 19k</text>
<text x="178" y="260.18" font-size="9.3" fill="#168a16" textLength="13.00" lengthAdjust="spacingAndGlyphs">43</text>
<text x="178.5" y="271.58" font-size="9.3" fill="#168a16" textLength="12.50" lengthAdjust="spacingAndGlyphs">R3</text>
<text x="177" y="283.38" font-size="9.3" fill="#168a16" textLength="20.00" lengthAdjust="spacingAndGlyphs">470</text>
<text x="148" y="296.38" font-size="9.3" fill="#168a16" textLength="14.00" lengthAdjust="spacingAndGlyphs">C2</text>
<text x="143" y="308.58" font-size="9.3" fill="#168a16" textLength="25.00" lengthAdjust="spacingAndGlyphs">470u</text>
<text x="146" y="338.18" font-size="9.3" fill="#168a16" textLength="13.00" lengthAdjust="spacingAndGlyphs">R4</text>
<text x="143" y="350.58" font-size="9.3" fill="#168a16" textLength="21.00" lengthAdjust="spacingAndGlyphs">1.8k</text>
<text x="219" y="263.38" font-size="9.3" fill="#168a16" textLength="13.00" lengthAdjust="spacingAndGlyphs">C3</text>
<text x="220" y="275.58" font-size="9.3" fill="#168a16" textLength="19.00" lengthAdjust="spacingAndGlyphs">22u</text>
<text x="216" y="286.38" font-size="9.3" fill="#168a16" textLength="13.00" lengthAdjust="spacingAndGlyphs">R6</text>
<text x="213" y="308.58" font-size="9.3" fill="#168a16" textLength="26.00" lengthAdjust="spacingAndGlyphs">100k</text>
<text x="270" y="286.18" font-size="9.3" fill="#168a16" textLength="13.00" lengthAdjust="spacingAndGlyphs">R8</text>
<text x="270" y="308.58" font-size="9.3" fill="#168a16" textLength="19.00" lengthAdjust="spacingAndGlyphs">100</text>
<text x="206.6" y="327.38" font-size="9.3" fill="#168a16" textLength="42.20" lengthAdjust="spacingAndGlyphs">BD139C</text>
<text x="217" y="341.68" font-size="9.3" fill="#168a16" textLength="13.60" lengthAdjust="spacingAndGlyphs">Q1</text>
<text x="257.5" y="363.48" font-size="9.3" fill="#168a16" textLength="62.70" lengthAdjust="spacingAndGlyphs">BZX84C8V2</text>
<text x="307" y="319.88" font-size="9.3" fill="#168a16" textLength="13.00" lengthAdjust="spacingAndGlyphs">D2</text>
<text x="339.8" y="335.38" font-size="9.3" fill="#168a16" textLength="37.20" lengthAdjust="spacingAndGlyphs">Switch1</text>
<text x="337.8" y="368.58" font-size="9.3" fill="#168a16" textLength="19.20" lengthAdjust="spacingAndGlyphs">R10</text>
<text x="338" y="380.88" font-size="9.3" fill="#168a16" textLength="21.50" lengthAdjust="spacingAndGlyphs">0.47</text>
<text x="383.5" y="368.58" font-size="9.3" fill="#168a16" textLength="20.50" lengthAdjust="spacingAndGlyphs">R11</text>
<text x="383.5" y="380.88" font-size="9.3" fill="#168a16" textLength="21.50" lengthAdjust="spacingAndGlyphs">0.47</text>
<text x="335" y="160.58" font-size="9.3" fill="#168a16" textLength="14.00" lengthAdjust="spacingAndGlyphs">R9</text>
<text x="335" y="170.58" font-size="9.3" fill="#168a16" textLength="24.50" lengthAdjust="spacingAndGlyphs">0.82</text>
<text x="331.7" y="197.58" font-size="9.3" fill="#168a16" textLength="14.30" lengthAdjust="spacingAndGlyphs">M1</text>
<text x="331.9" y="208.58" font-size="9.3" fill="#168a16" textLength="43.40" lengthAdjust="spacingAndGlyphs">IRFP150</text>
<text x="308.5" y="231.08" font-size="9.3" fill="#168a16" textLength="14.00" lengthAdjust="spacingAndGlyphs">D1</text>
<text x="331" y="231.08" font-size="9.3" fill="#168a16" textLength="63.50" lengthAdjust="spacingAndGlyphs">BZX84C8V2</text>
<text x="389" y="185.58" font-size="9.3" fill="#168a16" textLength="20.50" lengthAdjust="spacingAndGlyphs">V10</text>
<text x="387" y="199.08" font-size="9.3" fill="#168a16" textLength="20.00" lengthAdjust="spacingAndGlyphs">40V</text>
<text x="343.8" y="257.68" font-size="9.3" fill="#168a16" textLength="12.20" lengthAdjust="spacingAndGlyphs">RL</text>
<text x="347" y="278.48" font-size="9.3" fill="#168a16" textLength="5.50" lengthAdjust="spacingAndGlyphs">8</text>
<text x="386.6" y="282.58" font-size="9.3" fill="#168a16" textLength="14.00" lengthAdjust="spacingAndGlyphs">C4</text>
<text x="383.5" y="294.08" font-size="9.3" fill="#168a16" textLength="22.80" lengthAdjust="spacingAndGlyphs">22m</text>
<text x="331.9" y="287.48" font-size="9.3" fill="#168a16" textLength="14.10" lengthAdjust="spacingAndGlyphs">M2</text>
<text x="331.9" y="298.68" font-size="9.3" fill="#168a16" textLength="43.40" lengthAdjust="spacingAndGlyphs">IRFP150</text>
<text x="27.8" y="201.91" font-size="8" fill="#ff0000" textLength="6.00" lengthAdjust="spacingAndGlyphs">in</text>
<text x="310" y="262.68" font-size="9.3" fill="#0000ff" textLength="14.80" lengthAdjust="spacingAndGlyphs">out</text>
<text x="51.3" y="166.62" font-size="12.2" fill="#ff0000" textLength="101.00" lengthAdjust="spacing">.DEFINE ASIN 20M</text>
<text x="57" y="346.72" font-size="12.2" fill="#ff0000" textLength="75.70" lengthAdjust="spacing">R1C1 = R6C3</text>
<text x="27.5" y="440.5" font-size="16" font-weight="bold" fill="#000" textLength="516.5" lengthAdjust="spacingAndGlyphs">как видим с ростом сопротивления источника сигнала сужается</text>
<text x="27.5" y="459.5" font-size="16" font-weight="bold" fill="#000" textLength="442.5" lengthAdjust="spacingAndGlyphs">полоса, и растет ГВЗ. Линейный участок ГВЗ говорит о</text>
<text x="27.5" y="478.5" font-size="16" font-weight="bold" fill="#000" textLength="308.5" lengthAdjust="spacingAndGlyphs">малосигнальной полосе пропускания.</text>
<text x="27.5" y="497.5" font-size="16" font-weight="bold" fill="#000" textLength="520.0" lengthAdjust="spacingAndGlyphs">Поэтому желательно чтобы выходное сопротивление драйвера</text>
<text x="27.5" y="516.5" font-size="16" font-weight="bold" fill="#000" textLength="176.5" lengthAdjust="spacingAndGlyphs">было не более 500 Ом</text>
<defs>
<clipPath id="cp0"><rect x="677.5" y="106.5" width="538.25" height="114.4"/></clipPath>
<clipPath id="cp1"><rect x="677.5" y="254.5" width="538.25" height="114.39999999999998"/></clipPath>
<clipPath id="cp2"><rect x="677.5" y="402.4" width="538.25" height="109.0"/></clipPath>
</defs>
<text x="827" y="103.44" font-size="9.6" fill="#0000ff" text-anchor="start" textLength="238.00" lengthAdjust="spacingAndGlyphs">OPS_Ciuffoli-Savosin_Mod-2_20Hz.CIR RI=50...1k</text>
<path d="M698.68 106.5L698.68 220.3M710.48 106.5L710.48 220.3M718.86 106.5L718.86 220.3M725.35 106.5L725.35 220.3M730.66 106.5L730.66 220.3M735.15 106.5L735.15 220.3M739.04 106.5L739.04 220.3M742.46 106.5L742.46 220.3M745.53 106.5L745.53 220.3M765.71 106.5L765.71 220.3M777.51 106.5L777.51 220.3M785.89 106.5L785.89 220.3M792.38 106.5L792.38 220.3M797.69 106.5L797.69 220.3M802.18 106.5L802.18 220.3M806.07 106.5L806.07 220.3M809.50 106.5L809.50 220.3M812.56 106.5L812.56 220.3M832.74 106.5L832.74 220.3M844.54 106.5L844.54 220.3M852.92 106.5L852.92 220.3M859.42 106.5L859.42 220.3M864.72 106.5L864.72 220.3M869.21 106.5L869.21 220.3M873.10 106.5L873.10 220.3M876.53 106.5L876.53 220.3M879.59 106.5L879.59 220.3M899.77 106.5L899.77 220.3M911.58 106.5L911.58 220.3M919.95 106.5L919.95 220.3M926.45 106.5L926.45 220.3M931.75 106.5L931.75 220.3M936.24 106.5L936.24 220.3M940.13 106.5L940.13 220.3M943.56 106.5L943.56 220.3M946.62 106.5L946.62 220.3M966.80 106.5L966.80 220.3M978.61 106.5L978.61 220.3M986.98 106.5L986.98 220.3M993.48 106.5L993.48 220.3M998.79 106.5L998.79 220.3M1003.27 106.5L1003.27 220.3M1007.16 106.5L1007.16 220.3M1010.59 106.5L1010.59 220.3M1013.66 106.5L1013.66 220.3M1033.83 106.5L1033.83 220.3M1045.64 106.5L1045.64 220.3M1054.01 106.5L1054.01 220.3M1060.51 106.5L1060.51 220.3M1065.82 106.5L1065.82 220.3M1070.30 106.5L1070.30 220.3M1074.19 106.5L1074.19 220.3M1077.62 106.5L1077.62 220.3M1080.69 106.5L1080.69 220.3M1100.87 106.5L1100.87 220.3M1112.67 106.5L1112.67 220.3M1121.04 106.5L1121.04 220.3M1127.54 106.5L1127.54 220.3M1132.85 106.5L1132.85 220.3M1137.34 106.5L1137.34 220.3M1141.22 106.5L1141.22 220.3M1144.65 106.5L1144.65 220.3M1147.72 106.5L1147.72 220.3M1167.90 106.5L1167.90 220.3M1179.70 106.5L1179.70 220.3M1188.08 106.5L1188.08 220.3M1194.57 106.5L1194.57 220.3M1199.88 106.5L1199.88 220.3M1204.37 106.5L1204.37 220.3M1208.25 106.5L1208.25 220.3M1211.68 106.5L1211.68 220.3" stroke="#686868" stroke-width="1.0" stroke-dasharray="3.2 2.9" fill="none"/>
<path d="M678.5 163.40L1214.75 163.40M678.5 191.85L1214.75 191.85" stroke="#686868" stroke-width="1.0" stroke-dasharray="3.2 2.9" fill="none"/>
<rect x="678.5" y="106.5" width="536.25" height="113.80000000000001" stroke="#707070" stroke-width="1.3" fill="none"/>
<text transform="translate(675.5,109.94) scale(1.1,1)" font-size="9.6" fill="#0000ff" text-anchor="end">6.000</text>
<text transform="translate(675.5,138.89) scale(1.1,1)" font-size="9.6" fill="#0000ff" text-anchor="end">0.000</text>
<text transform="translate(675.5,167.14) scale(1.1,1)" font-size="9.6" fill="#0000ff" text-anchor="end">-6.000</text>
<text transform="translate(675.5,195.69) scale(1.1,1)" font-size="9.6" fill="#0000ff" text-anchor="end">-12.000</text>
<text transform="translate(675.5,224.74) scale(1.1,1)" font-size="9.6" fill="#0000ff" text-anchor="end">-18.000</text>
<text transform="translate(679.3,230.94) scale(1.08,1)" font-size="9.6" fill="#0000ff" text-anchor="start">1</text>
<text transform="translate(745.53125,230.94) scale(1.08,1)" font-size="9.6" fill="#0000ff" text-anchor="middle">10</text>
<text transform="translate(812.5625,230.94) scale(1.08,1)" font-size="9.6" fill="#0000ff" text-anchor="middle">100</text>
<text transform="translate(879.59375,230.94) scale(1.08,1)" font-size="9.6" fill="#0000ff" text-anchor="middle">1K</text>
<text transform="translate(946.625,230.94) scale(1.08,1)" font-size="9.6" fill="#0000ff" text-anchor="middle">10K</text>
<text transform="translate(1013.65625,230.94) scale(1.08,1)" font-size="9.6" fill="#0000ff" text-anchor="middle">100K</text>
<text transform="translate(1080.6875,230.94) scale(1.08,1)" font-size="9.6" fill="#0000ff" text-anchor="middle">1M</text>
<text transform="translate(1147.71875,230.94) scale(1.08,1)" font-size="9.6" fill="#0000ff" text-anchor="middle">10M</text>
<text transform="translate(1214.75,230.94) scale(1.08,1)" font-size="9.6" fill="#0000ff" text-anchor="middle">100M</text>
<text x="678.5" y="244.44" font-size="9.6" fill="#0000ff" text-anchor="start" textLength="50.50" lengthAdjust="spacingAndGlyphs">db(v(OUT))</text>
<path d="M678.5 244.9H729" stroke="#0000ff" stroke-width="0.9"/>
<path d="M678.5 135.14999999999998H1214.75" stroke="#0000ff" stroke-width="1.2"/>
<path d="M678.50 135.15C729.58 135.13 931.42 135.15 985.00 135.05C1038.58 134.95 994.00 134.67 1000.00 134.55C1006.00 134.42 1014.33 134.43 1021.00 134.30C1027.67 134.18 1033.77 133.93 1040.00 133.80C1046.23 133.67 1053.07 133.60 1058.40 133.50C1063.73 133.40 1068.48 133.25 1072.00 133.20C1075.52 133.15 1077.57 133.10 1079.50 133.20C1081.43 133.30 1082.37 133.38 1083.60 133.80C1084.83 134.22 1085.90 134.97 1086.90 135.70C1087.90 136.43 1088.72 137.25 1089.60 138.20C1090.48 139.15 1090.87 139.23 1092.20 141.40C1093.53 143.57 1095.82 147.63 1097.60 151.20C1099.38 154.77 1101.12 158.80 1102.90 162.80C1104.68 166.80 1106.52 170.75 1108.30 175.20C1110.08 179.65 1111.82 185.03 1113.60 189.50C1115.38 193.97 1117.37 198.15 1119.00 202.00C1120.63 205.85 1122.13 209.27 1123.40 212.60C1124.67 215.93 1126.07 220.43 1126.60 222.00" stroke="#ff0000" stroke-width="3.4" fill="none" stroke-linejoin="round" clip-path="url(#cp0)"/>
<path d="M678.50 135.15C732.92 135.15 947.92 135.01 1005.00 135.15C1062.08 135.29 1015.37 135.56 1021.00 136.00C1026.63 136.44 1033.75 136.90 1038.80 137.80C1043.85 138.70 1047.73 139.92 1051.30 141.40C1054.87 142.88 1057.23 144.48 1060.20 146.70C1063.17 148.92 1066.43 151.73 1069.10 154.70C1071.77 157.67 1073.98 160.78 1076.20 164.50C1078.42 168.22 1080.32 172.83 1082.40 177.00C1084.48 181.17 1086.77 185.33 1088.70 189.50C1090.63 193.67 1092.22 198.00 1094.00 202.00C1095.78 206.00 1097.83 210.17 1099.40 213.50C1100.97 216.83 1102.73 220.58 1103.40 222.00" stroke="#008000" stroke-width="3.6" fill="none" stroke-linejoin="round" clip-path="url(#cp0)"/>
<path d="M678.50 135.15C728.75 135.15 927.67 135.06 980.00 135.15C1032.33 135.24 988.05 135.46 992.50 135.70C996.95 135.94 1001.95 136.15 1006.70 136.60C1011.45 137.05 1016.53 137.45 1021.00 138.40C1025.47 139.35 1029.65 140.77 1033.50 142.30C1037.35 143.83 1040.85 145.53 1044.10 147.60C1047.35 149.67 1050.32 152.17 1053.00 154.70C1055.68 157.23 1057.82 159.67 1060.20 162.80C1062.58 165.93 1064.93 169.65 1067.30 173.50C1069.67 177.35 1072.17 181.75 1074.40 185.90C1076.63 190.05 1078.62 194.23 1080.70 198.40C1082.78 202.57 1084.95 206.97 1086.90 210.90C1088.85 214.83 1091.48 220.15 1092.40 222.00" stroke="#0000ff" stroke-width="3.7" fill="none" stroke-linejoin="round" clip-path="url(#cp0)"/>
<path d="M680 133.5H696" stroke="#ff0000" stroke-width="1.0"/><path d="M680 137.2v1M696 137.2v1" stroke="#ff0000" stroke-width="1"/><path d="M684 137.2v1" stroke="#008000" stroke-width="1"/>
<text x="988" y="179.9" font-size="16" font-weight="bold" fill="#3a4fc4" textLength="50" lengthAdjust="spacingAndGlyphs">Ri = 1k</text>
<text x="988.5" y="208.7" font-size="16" font-weight="bold" fill="#2f9a3c" textLength="59" lengthAdjust="spacingAndGlyphs">Ri = 500</text>
<text x="1120.5" y="182.6" font-size="16" font-weight="bold" fill="#e8262a" textLength="50.3" lengthAdjust="spacingAndGlyphs">Ri = 50</text>
<path d="M698.68 254.5L698.68 368.3M710.48 254.5L710.48 368.3M718.86 254.5L718.86 368.3M725.35 254.5L725.35 368.3M730.66 254.5L730.66 368.3M735.15 254.5L735.15 368.3M739.04 254.5L739.04 368.3M742.46 254.5L742.46 368.3M745.53 254.5L745.53 368.3M765.71 254.5L765.71 368.3M777.51 254.5L777.51 368.3M785.89 254.5L785.89 368.3M792.38 254.5L792.38 368.3M797.69 254.5L797.69 368.3M802.18 254.5L802.18 368.3M806.07 254.5L806.07 368.3M809.50 254.5L809.50 368.3M812.56 254.5L812.56 368.3M832.74 254.5L832.74 368.3M844.54 254.5L844.54 368.3M852.92 254.5L852.92 368.3M859.42 254.5L859.42 368.3M864.72 254.5L864.72 368.3M869.21 254.5L869.21 368.3M873.10 254.5L873.10 368.3M876.53 254.5L876.53 368.3M879.59 254.5L879.59 368.3M899.77 254.5L899.77 368.3M911.58 254.5L911.58 368.3M919.95 254.5L919.95 368.3M926.45 254.5L926.45 368.3M931.75 254.5L931.75 368.3M936.24 254.5L936.24 368.3M940.13 254.5L940.13 368.3M943.56 254.5L943.56 368.3M946.62 254.5L946.62 368.3M966.80 254.5L966.80 368.3M978.61 254.5L978.61 368.3M986.98 254.5L986.98 368.3M993.48 254.5L993.48 368.3M998.79 254.5L998.79 368.3M1003.27 254.5L1003.27 368.3M1007.16 254.5L1007.16 368.3M1010.59 254.5L1010.59 368.3M1013.66 254.5L1013.66 368.3M1033.83 254.5L1033.83 368.3M1045.64 254.5L1045.64 368.3M1054.01 254.5L1054.01 368.3M1060.51 254.5L1060.51 368.3M1065.82 254.5L1065.82 368.3M1070.30 254.5L1070.30 368.3M1074.19 254.5L1074.19 368.3M1077.62 254.5L1077.62 368.3M1080.69 254.5L1080.69 368.3M1100.87 254.5L1100.87 368.3M1112.67 254.5L1112.67 368.3M1121.04 254.5L1121.04 368.3M1127.54 254.5L1127.54 368.3M1132.85 254.5L1132.85 368.3M1137.34 254.5L1137.34 368.3M1141.22 254.5L1141.22 368.3M1144.65 254.5L1144.65 368.3M1147.72 254.5L1147.72 368.3M1167.90 254.5L1167.90 368.3M1179.70 254.5L1179.70 368.3M1188.08 254.5L1188.08 368.3M1194.57 254.5L1194.57 368.3M1199.88 254.5L1199.88 368.3M1204.37 254.5L1204.37 368.3M1208.25 254.5L1208.25 368.3M1211.68 254.5L1211.68 368.3" stroke="#686868" stroke-width="1.0" stroke-dasharray="3.2 2.9" fill="none"/>
<path d="M678.5 287.01L1214.75 287.01M678.5 303.27L1214.75 303.27M678.5 319.53L1214.75 319.53M678.5 335.79L1214.75 335.79M678.5 352.04L1214.75 352.04" stroke="#686868" stroke-width="1.0" stroke-dasharray="3.2 2.9" fill="none"/>
<rect x="678.5" y="254.5" width="536.25" height="113.80000000000001" stroke="#707070" stroke-width="1.3" fill="none"/>
<text transform="translate(675.5,258.04) scale(1.1,1)" font-size="9.6" fill="#0000ff" text-anchor="end">45.000</text>
<text transform="translate(675.5,274.29) scale(1.1,1)" font-size="9.6" fill="#0000ff" text-anchor="end">0.000</text>
<text transform="translate(675.5,290.55) scale(1.1,1)" font-size="9.6" fill="#0000ff" text-anchor="end">-45.000</text>
<text transform="translate(675.5,306.81) scale(1.1,1)" font-size="9.6" fill="#0000ff" text-anchor="end">-90.000</text>
<text transform="translate(675.5,323.07) scale(1.1,1)" font-size="9.6" fill="#0000ff" text-anchor="end">-135.000</text>
<text transform="translate(675.5,339.32) scale(1.1,1)" font-size="9.6" fill="#0000ff" text-anchor="end">-180.000</text>
<text transform="translate(675.5,355.58) scale(1.1,1)" font-size="9.6" fill="#0000ff" text-anchor="end">-225.000</text>
<text transform="translate(675.5,371.84) scale(1.1,1)" font-size="9.6" fill="#0000ff" text-anchor="end">-270.000</text>
<text transform="translate(679.3,379.04) scale(1.08,1)" font-size="9.6" fill="#0000ff" text-anchor="start">1</text>
<text transform="translate(745.53125,379.04) scale(1.08,1)" font-size="9.6" fill="#0000ff" text-anchor="middle">10</text>
<text transform="translate(812.5625,379.04) scale(1.08,1)" font-size="9.6" fill="#0000ff" text-anchor="middle">100</text>
<text transform="translate(879.59375,379.04) scale(1.08,1)" font-size="9.6" fill="#0000ff" text-anchor="middle">1K</text>
<text transform="translate(946.625,379.04) scale(1.08,1)" font-size="9.6" fill="#0000ff" text-anchor="middle">10K</text>
<text transform="translate(1013.65625,379.04) scale(1.08,1)" font-size="9.6" fill="#0000ff" text-anchor="middle">100K</text>
<text transform="translate(1080.6875,379.04) scale(1.08,1)" font-size="9.6" fill="#0000ff" text-anchor="middle">1M</text>
<text transform="translate(1147.71875,379.04) scale(1.08,1)" font-size="9.6" fill="#0000ff" text-anchor="middle">10M</text>
<text transform="translate(1214.75,379.04) scale(1.08,1)" font-size="9.6" fill="#0000ff" text-anchor="middle">100M</text>
<text x="678.5" y="392.34" font-size="9.6" fill="#ff2a1a" text-anchor="start" textLength="97.50" lengthAdjust="spacingAndGlyphs">ph(v(OUT)) (Degrees)</text>
<path d="M678.5 270.5571428571429H1214.75" stroke="#0000ff" stroke-width="1.2"/>
<path d="M900.00 269.76C915.00 269.74 971.53 269.37 990.00 269.66C1008.47 269.95 1002.85 270.81 1010.80 271.50C1018.75 272.19 1030.02 272.85 1037.70 273.80C1045.38 274.75 1051.77 276.05 1056.90 277.20C1062.03 278.35 1064.65 279.10 1068.50 280.70C1072.35 282.30 1076.80 284.65 1080.00 286.80C1083.20 288.95 1085.13 291.18 1087.70 293.60C1090.27 296.02 1092.83 298.83 1095.40 301.30C1097.97 303.77 1100.53 306.55 1103.10 308.40C1105.67 310.25 1108.23 311.50 1110.80 312.40C1113.37 313.30 1115.30 313.57 1118.50 313.80C1121.70 314.03 1125.83 314.07 1130.00 313.80C1134.17 313.53 1138.37 312.82 1143.50 312.20C1148.63 311.58 1155.68 310.45 1160.80 310.10C1165.92 309.75 1169.72 309.83 1174.20 310.10C1178.68 310.37 1183.20 311.15 1187.70 311.70C1192.20 312.25 1196.69 313.02 1201.20 313.40C1205.71 313.78 1212.49 313.90 1214.75 314.00" stroke="#ff0000" stroke-width="3.5" fill="none" stroke-linejoin="round" clip-path="url(#cp1)"/>
<path d="M900.00 269.76C910.17 269.90 947.67 270.36 961.00 270.60C974.33 270.84 974.27 270.98 980.00 271.20C985.73 271.42 988.98 271.05 995.40 271.90C1001.82 272.75 1011.45 274.62 1018.50 276.30C1025.55 277.98 1031.30 279.60 1037.70 282.00C1044.10 284.40 1051.13 287.65 1056.90 290.70C1062.67 293.75 1067.82 297.52 1072.30 300.30C1076.78 303.08 1079.95 305.38 1083.80 307.40C1087.65 309.42 1091.87 311.18 1095.40 312.40C1098.93 313.62 1101.80 314.15 1105.00 314.70C1108.20 315.25 1111.72 315.55 1114.60 315.70C1117.48 315.85 1119.10 315.85 1122.30 315.60C1125.50 315.35 1129.63 314.77 1133.80 314.20C1137.97 313.63 1142.80 312.73 1147.30 312.20C1151.80 311.67 1156.32 311.20 1160.80 311.00C1165.28 310.80 1169.72 310.75 1174.20 311.00C1178.68 311.25 1183.20 311.93 1187.70 312.50C1192.20 313.07 1196.69 314.02 1201.20 314.40C1205.71 314.78 1212.49 314.73 1214.75 314.80" stroke="#008000" stroke-width="3.7" fill="none" stroke-linejoin="round" clip-path="url(#cp1)"/>
<path d="M678.50 269.76C715.42 269.76 856.42 269.62 900.00 269.76C943.58 269.90 929.83 270.33 940.00 270.60C950.17 270.87 954.33 271.00 961.00 271.40C967.67 271.80 973.63 272.28 980.00 273.00C986.37 273.72 992.78 274.52 999.20 275.70C1005.62 276.88 1012.08 278.08 1018.50 280.10C1024.92 282.12 1031.30 284.92 1037.70 287.80C1044.10 290.68 1050.48 294.20 1056.90 297.40C1063.32 300.60 1071.07 304.50 1076.20 307.00C1081.33 309.50 1083.87 311.05 1087.70 312.40C1091.53 313.75 1095.35 314.45 1099.20 315.10C1103.05 315.75 1106.95 316.20 1110.80 316.30C1114.65 316.40 1118.47 316.03 1122.30 315.70C1126.13 315.37 1129.63 314.85 1133.80 314.30C1137.97 313.75 1142.80 312.90 1147.30 312.40C1151.80 311.90 1156.32 311.48 1160.80 311.30C1165.28 311.12 1169.72 311.05 1174.20 311.30C1178.68 311.55 1183.20 312.23 1187.70 312.80C1192.20 313.37 1196.69 314.32 1201.20 314.70C1205.71 315.08 1212.49 315.03 1214.75 315.10" stroke="#0000ff" stroke-width="4.0" fill="none" stroke-linejoin="round" clip-path="url(#cp1)"/>
<path d="M698.68 402.5L698.68 510M710.48 402.5L710.48 510M718.86 402.5L718.86 510M725.35 402.5L725.35 510M730.66 402.5L730.66 510M735.15 402.5L735.15 510M739.04 402.5L739.04 510M742.46 402.5L742.46 510M745.53 402.5L745.53 510M765.71 402.5L765.71 510M777.51 402.5L777.51 510M785.89 402.5L785.89 510M792.38 402.5L792.38 510M797.69 402.5L797.69 510M802.18 402.5L802.18 510M806.07 402.5L806.07 510M809.50 402.5L809.50 510M812.56 402.5L812.56 510M832.74 402.5L832.74 510M844.54 402.5L844.54 510M852.92 402.5L852.92 510M859.42 402.5L859.42 510M864.72 402.5L864.72 510M869.21 402.5L869.21 510M873.10 402.5L873.10 510M876.53 402.5L876.53 510M879.59 402.5L879.59 510M899.77 402.5L899.77 510M911.58 402.5L911.58 510M919.95 402.5L919.95 510M926.45 402.5L926.45 510M931.75 402.5L931.75 510M936.24 402.5L936.24 510M940.13 402.5L940.13 510M943.56 402.5L943.56 510M946.62 402.5L946.62 510M966.80 402.5L966.80 510M978.61 402.5L978.61 510M986.98 402.5L986.98 510M993.48 402.5L993.48 510M998.79 402.5L998.79 510M1003.27 402.5L1003.27 510M1007.16 402.5L1007.16 510M1010.59 402.5L1010.59 510M1013.66 402.5L1013.66 510M1033.83 402.5L1033.83 510M1045.64 402.5L1045.64 510M1054.01 402.5L1054.01 510M1060.51 402.5L1060.51 510M1065.82 402.5L1065.82 510M1070.30 402.5L1070.30 510M1074.19 402.5L1074.19 510M1077.62 402.5L1077.62 510M1080.69 402.5L1080.69 510M1100.87 402.5L1100.87 510M1112.67 402.5L1112.67 510M1121.04 402.5L1121.04 510M1127.54 402.5L1127.54 510M1132.85 402.5L1132.85 510M1137.34 402.5L1137.34 510M1141.22 402.5L1141.22 510M1144.65 402.5L1144.65 510M1147.72 402.5L1147.72 510M1167.90 402.5L1167.90 510M1179.70 402.5L1179.70 510M1188.08 402.5L1188.08 510M1194.57 402.5L1194.57 510M1199.88 402.5L1199.88 510M1204.37 402.5L1204.37 510M1208.25 402.5L1208.25 510M1211.68 402.5L1211.68 510" stroke="#686868" stroke-width="1.0" stroke-dasharray="3.2 2.9" fill="none"/>
<path d="M678.5 413.25L1214.75 413.25M678.5 424.00L1214.75 424.00M678.5 434.75L1214.75 434.75M678.5 445.50L1214.75 445.50M678.5 456.25L1214.75 456.25M678.5 467.00L1214.75 467.00M678.5 477.75L1214.75 477.75M678.5 488.50L1214.75 488.50M678.5 499.25L1214.75 499.25" stroke="#686868" stroke-width="1.0" stroke-dasharray="3.2 2.9" fill="none"/>
<rect x="678.5" y="402.5" width="536.25" height="107.5" stroke="#707070" stroke-width="1.3" fill="none"/>
<text transform="translate(675.5,405.94) scale(1.1,1)" font-size="9.6" fill="#0000ff" text-anchor="end">1.000u</text>
<text transform="translate(675.5,427.64) scale(1.1,1)" font-size="9.6" fill="#0000ff" text-anchor="end">0.800u</text>
<text transform="translate(675.5,449.14) scale(1.1,1)" font-size="9.6" fill="#0000ff" text-anchor="end">0.600u</text>
<text transform="translate(675.5,470.64) scale(1.1,1)" font-size="9.6" fill="#0000ff" text-anchor="end">0.400u</text>
<text transform="translate(675.5,492.14) scale(1.1,1)" font-size="9.6" fill="#0000ff" text-anchor="end">0.200u</text>
<text transform="translate(675.5,513.64) scale(1.1,1)" font-size="9.6" fill="#0000ff" text-anchor="end">0.000u</text>
<text transform="translate(679.3,521.24) scale(1.08,1)" font-size="9.6" fill="#0000ff" text-anchor="start">1</text>
<text transform="translate(745.53125,521.24) scale(1.08,1)" font-size="9.6" fill="#0000ff" text-anchor="middle">10</text>
<text transform="translate(812.5625,521.24) scale(1.08,1)" font-size="9.6" fill="#0000ff" text-anchor="middle">100</text>
<text transform="translate(879.59375,521.24) scale(1.08,1)" font-size="9.6" fill="#0000ff" text-anchor="middle">1K</text>
<text transform="translate(946.625,521.24) scale(1.08,1)" font-size="9.6" fill="#0000ff" text-anchor="middle">10K</text>
<text transform="translate(1013.65625,521.24) scale(1.08,1)" font-size="9.6" fill="#0000ff" text-anchor="middle">100K</text>
<text transform="translate(1080.6875,521.24) scale(1.08,1)" font-size="9.6" fill="#0000ff" text-anchor="middle">1M</text>
<text transform="translate(1147.71875,521.24) scale(1.08,1)" font-size="9.6" fill="#0000ff" text-anchor="middle">10M</text>
<text transform="translate(1214.75,521.24) scale(1.08,1)" font-size="9.6" fill="#0000ff" text-anchor="middle">100M</text>
<text x="678.5" y="534.44" font-size="9.6" fill="#202020" text-anchor="start" textLength="53.50" lengthAdjust="spacingAndGlyphs">GD(v(OUT))</text>
<text x="880.8" y="547.24" font-size="9.6" fill="#0000ff" text-anchor="start" textLength="26.20" lengthAdjust="spacingAndGlyphs">F (Hz)</text>
<path d="M678.5 510H1214.75" stroke="#0000ff" stroke-width="1.6"/>
<path d="M813.80 398.00C813.98 398.73 814.05 399.08 814.90 402.40C815.75 405.72 817.58 413.00 818.90 417.90C820.22 422.80 821.32 427.50 822.80 431.80C824.28 436.10 825.97 439.90 827.80 443.70C829.63 447.50 831.48 451.45 833.80 454.60C836.12 457.75 838.72 460.37 841.70 462.60C844.68 464.83 848.05 466.65 851.70 468.00C855.35 469.35 858.97 469.98 863.60 470.70C868.23 471.42 873.43 471.95 879.50 472.30C885.57 472.65 874.08 472.68 900.00 472.80C925.92 472.92 1010.75 472.55 1035.00 473.00C1059.25 473.45 1042.07 474.57 1045.50 475.50C1048.93 476.43 1052.23 477.13 1055.60 478.60C1058.97 480.07 1062.32 482.18 1065.70 484.30C1069.08 486.42 1072.52 488.97 1075.90 491.30C1079.28 493.63 1082.62 496.18 1086.00 498.30C1089.38 500.42 1092.82 502.42 1096.20 504.00C1099.58 505.58 1102.93 506.90 1106.30 507.80C1109.67 508.70 1112.45 509.03 1116.40 509.40C1120.35 509.77 1113.73 509.90 1130.00 510.00C1146.27 510.10 1200.00 510.00 1214.00 510.00" stroke="#008000" stroke-width="3.7" fill="none" stroke-linejoin="round" clip-path="url(#cp2)"/>
<path d="M809.80 398.00C809.98 398.73 810.05 399.08 810.90 402.40C811.75 405.72 813.57 412.02 814.90 417.90C816.23 423.78 817.58 431.75 818.90 437.70C820.22 443.65 821.32 448.63 822.80 453.60C824.28 458.57 825.97 463.18 827.80 467.50C829.63 471.82 831.48 476.02 833.80 479.50C836.12 482.98 838.72 485.92 841.70 488.40C844.68 490.88 848.05 492.97 851.70 494.40C855.35 495.83 858.97 496.32 863.60 497.00C868.23 497.68 874.20 498.17 879.50 498.50C884.80 498.83 870.48 498.92 895.40 499.00C920.32 499.08 1003.57 499.12 1029.00 499.00C1054.43 498.88 1042.72 498.78 1048.00 498.30C1053.28 497.82 1056.90 496.73 1060.70 496.10C1064.50 495.47 1067.85 495.15 1070.80 494.50C1073.75 493.85 1076.07 492.73 1078.40 492.20C1080.73 491.67 1082.68 491.23 1084.80 491.30C1086.92 491.37 1089.20 491.65 1091.10 492.60C1093.00 493.55 1094.52 495.53 1096.20 497.00C1097.88 498.47 1099.30 500.03 1101.20 501.40C1103.10 502.77 1105.27 504.07 1107.60 505.20C1109.93 506.33 1112.88 507.50 1115.20 508.20C1117.52 508.90 1118.20 509.10 1121.50 509.40C1124.80 509.70 1119.58 509.90 1135.00 510.00C1150.42 510.10 1200.83 510.00 1214.00 510.00" stroke="#ff0000" stroke-width="3.6" fill="none" stroke-linejoin="round" clip-path="url(#cp2)"/>
<path d="M820.80 398.00C821.13 398.73 821.80 400.08 822.80 402.40C823.80 404.72 825.30 408.82 826.80 411.90C828.30 414.98 829.98 418.08 831.80 420.90C833.62 423.72 835.38 426.42 837.70 428.80C840.02 431.18 842.72 433.45 845.70 435.20C848.68 436.95 851.97 438.28 855.60 439.30C859.23 440.32 862.87 440.73 867.50 441.30C872.13 441.87 878.10 442.32 883.40 442.70C888.70 443.08 883.40 443.42 899.30 443.60C915.20 443.78 962.23 443.52 978.80 443.80C995.37 444.08 993.40 444.70 998.70 445.30C1004.00 445.90 1007.03 446.38 1010.60 447.40C1014.17 448.42 1016.82 449.78 1020.10 451.40C1023.38 453.02 1026.92 454.78 1030.30 457.10C1033.68 459.42 1037.03 462.23 1040.40 465.30C1043.77 468.37 1047.12 472.12 1050.50 475.50C1053.88 478.88 1057.32 482.43 1060.70 485.60C1064.08 488.77 1067.43 491.97 1070.80 494.50C1074.17 497.03 1077.52 498.90 1080.90 500.80C1084.28 502.70 1088.13 504.57 1091.10 505.90C1094.07 507.23 1096.17 508.15 1098.70 508.80C1101.23 509.45 1102.75 509.60 1106.30 509.80C1109.85 510.00 1101.92 509.97 1120.00 510.00C1138.08 510.03 1198.96 510.00 1214.75 510.00" stroke="#0000ff" stroke-width="3.9" fill="none" stroke-linejoin="round" clip-path="url(#cp2)"/>
</svg>
</body></html>
